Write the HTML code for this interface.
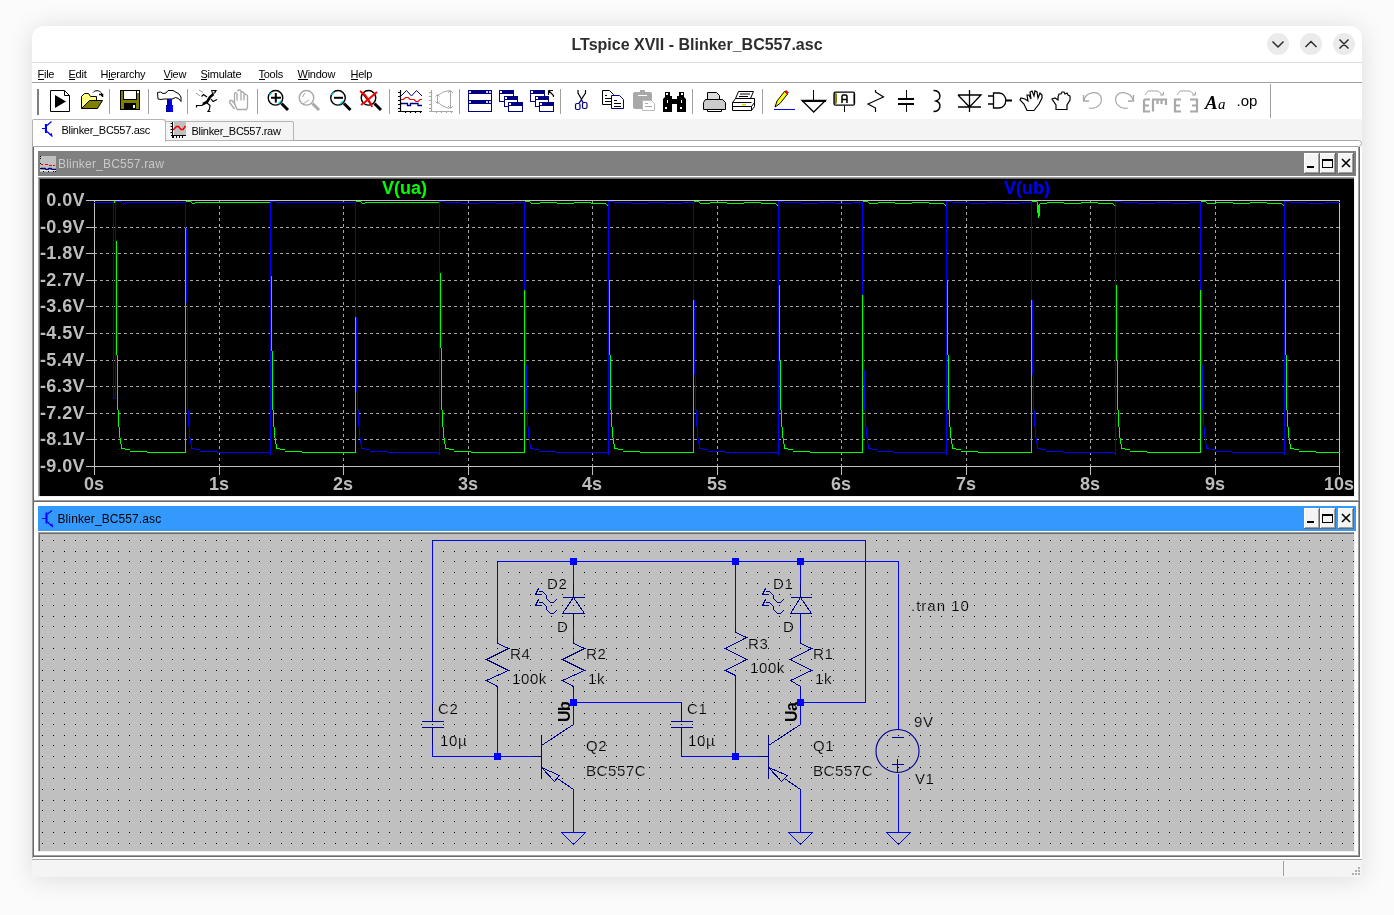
<!DOCTYPE html>
<html><head><meta charset="utf-8"><style>
*{margin:0;padding:0;box-sizing:border-box}
html,body{width:1394px;height:915px;overflow:hidden;background:#fbfbfb;font-family:"Liberation Sans", sans-serif}
.a{position:absolute}
svg{will-change:transform}
#win{left:32px;top:26px;width:1330px;height:851px;background:#fff;border-radius:12px 12px 0 0;box-shadow:0 2px 26px rgba(0,0,0,0.13)}
#title{left:0;top:33px;width:1394px;text-align:center;font-size:16px;font-weight:bold;color:#303030}
.cb{width:22px;height:22px;border-radius:50%;background:#ebebeb;top:33px}
.menu{top:67px;font-size:12px;color:#000}
.menu u{text-decoration:underline}
.tab{font-size:11.5px;color:#000}
</style></head><body>
<div id="win" class="a"></div>
<div class="a cb" style="left:1267px"></div>
<div class="a cb" style="left:1300px"></div>
<div class="a cb" style="left:1333px"></div>
<div class="a" style="left:32px;top:62px;width:1330px;height:1px;background:#dedede"></div>
<div class="a" style="left:32px;top:82px;width:1330px;height:1px;background:#a0a0a0"></div>
<!-- tab strip -->
<div class="a" style="left:32px;top:119px;width:1330px;height:22px;background:#f4f4f4"></div>
<div class="a" style="left:32px;top:140px;width:1330px;height:7px;background:#fff;border:1px solid #a8a8a8;border-radius:0 4px 4px 0"></div>
<div class="a" style="left:165px;top:121px;width:129px;height:20px;background:#f4f4f4;border:1px solid #b4b4b4;border-radius:2px 2px 0 0"></div>
<div class="a" style="left:32px;top:119px;width:134px;height:23px;background:#fff;border:1px solid #b4b4b4;border-bottom:none;border-radius:2px 3px 0 0"></div>
<!-- MDI -->
<div class="a" style="left:32px;top:147px;width:1330px;height:712px;background:#fff"></div>
<div class="a" style="left:32px;top:147px;width:1px;height:711px;background:#a0a0a0"></div>
<div class="a" style="left:33px;top:147px;width:1px;height:710px;background:#696969"></div>
<!-- raw child -->
<div class="a" style="left:1358px;top:147px;width:1px;height:354px;background:#a0a0a0"></div>
<div class="a" style="left:1359px;top:147px;width:1px;height:355px;background:#696969"></div>
<div class="a" style="left:34px;top:500px;width:1325px;height:1px;background:#a0a0a0"></div>
<div class="a" style="left:34px;top:501px;width:1326px;height:1px;background:#696969"></div>
<div class="a" style="left:38px;top:151px;width:1318px;height:25px;background:#808080"></div>
<div class="a" style="left:38px;top:177px;width:1316px;height:1px;background:#a0a0a0"></div>
<div class="a" style="left:39px;top:178px;width:1315px;height:1px;background:#696969"></div>
<div class="a" style="left:38px;top:177px;width:1px;height:320px;background:#a0a0a0"></div>
<div class="a" style="left:39px;top:178px;width:1px;height:318px;background:#696969"></div>
<div class="a" style="left:38px;top:496px;width:1318px;height:1px;background:#f0f0f0"></div>
<div class="a" style="left:1354px;top:177px;width:1px;height:320px;background:#f0f0f0"></div>
<!-- asc child -->
<div class="a" style="left:1358px;top:502px;width:1px;height:354px;background:#a0a0a0"></div>
<div class="a" style="left:1359px;top:502px;width:1px;height:355px;background:#696969"></div>
<div class="a" style="left:34px;top:855px;width:1325px;height:1px;background:#a0a0a0"></div>
<div class="a" style="left:34px;top:856px;width:1326px;height:1px;background:#696969"></div>
<div class="a" style="left:38px;top:506px;width:1318px;height:25px;background:#3399fd"></div>
<div class="a" style="left:38px;top:532px;width:1316px;height:1px;background:#a0a0a0"></div>
<div class="a" style="left:39px;top:533px;width:1315px;height:1px;background:#696969"></div>
<div class="a" style="left:38px;top:532px;width:1px;height:320px;background:#a0a0a0"></div>
<div class="a" style="left:39px;top:533px;width:1px;height:318px;background:#696969"></div>
<div class="a" style="left:38px;top:851px;width:1318px;height:1px;background:#f0f0f0"></div>
<div class="a" style="left:1354px;top:532px;width:1px;height:320px;background:#f0f0f0"></div>
<!-- status -->
<div class="a" style="left:32px;top:859px;width:1330px;height:1px;background:#a8a8a8"></div>
<div class="a" style="left:32px;top:860px;width:1330px;height:17px;background:#f4f4f4"></div>
<div class="a" style="left:1283px;top:861px;width:1px;height:15px;background:#a0a0a0"></div>
<svg class="a" style="left:0;top:0" width="1394" height="915">
<text x="697" y="49.5" text-anchor="middle" font-family='"Liberation Sans", sans-serif' font-size="16" font-weight="bold" fill="#2e2e2e">LTspice XVII - Blinker_BC557.asc</text><path d="M1272.5 41.5L1278 47L1283.5 41.5M1305.5 47L1311 41.5L1316.5 47M1339.5 39.5L1348.5 48.5M1348.5 39.5L1339.5 48.5" fill="none" stroke="#2e2e2e" stroke-width="1.5"/><text x="37.5" y="78" font-family='"Liberation Sans", sans-serif' font-size="11" letter-spacing="-0.25" fill="#000">File</text><text x="68.5" y="78" font-family='"Liberation Sans", sans-serif' font-size="11" letter-spacing="-0.25" fill="#000">Edit</text><text x="100.5" y="78" font-family='"Liberation Sans", sans-serif' font-size="11" letter-spacing="-0.25" fill="#000">Hierarchy</text><text x="163.5" y="78" font-family='"Liberation Sans", sans-serif' font-size="11" letter-spacing="-0.25" fill="#000">View</text><text x="200.5" y="78" font-family='"Liberation Sans", sans-serif' font-size="11" letter-spacing="-0.25" fill="#000">Simulate</text><text x="258.5" y="78" font-family='"Liberation Sans", sans-serif' font-size="11" letter-spacing="-0.25" fill="#000">Tools</text><text x="297.5" y="78" font-family='"Liberation Sans", sans-serif' font-size="11" letter-spacing="-0.25" fill="#000">Window</text><text x="350.5" y="78" font-family='"Liberation Sans", sans-serif' font-size="11" letter-spacing="-0.25" fill="#000">Help</text><rect x="38" y="79" width="6" height="1" fill="#000"/><rect x="69" y="79" width="6" height="1" fill="#000"/><rect x="108" y="79" width="6" height="1" fill="#000"/><rect x="164" y="79" width="7" height="1" fill="#000"/><rect x="201" y="79" width="6" height="1" fill="#000"/><rect x="259" y="79" width="6" height="1" fill="#000"/><rect x="298" y="79" width="10" height="1" fill="#000"/><rect x="351" y="79" width="7" height="1" fill="#000"/><text x="61.5" y="134" font-family='"Liberation Sans", sans-serif' font-size="11" letter-spacing="-0.3" fill="#000">Blinker_BC557.asc</text><text x="191.5" y="135" font-family='"Liberation Sans", sans-serif' font-size="11" letter-spacing="-0.3" fill="#000">Blinker_BC557.raw</text><path d="M42 128.5H45M45.5 124V133M47 125.5L51.5 121.5M47 131.5L52.5 136.5" stroke="#0000ff" stroke-width="1.2" fill="none"/><rect x="45" y="124" width="2" height="9" fill="#0000ff"/><path d="M49 134.5L52 133V136Z" fill="#0000ff"/><rect x="174" y="122" width="12" height="13" fill="#c0c0c0"/><path d="M172.5 122V138M170.5 123.5H172M170.5 126.5H172M170.5 129.5H172M170.5 132.5H172M171 135.5H186M173.5 136V138M176.5 136V138M179.5 136V138M182.5 136V138" stroke="#000" stroke-width="1" fill="none"/><path d="M173 130L176.5 126.5H178.5L181 129.5H183L185.5 126" stroke="#ff0000" stroke-width="1.5" fill="none"/><text x="58" y="168" font-family='"Liberation Sans", sans-serif' font-size="12" letter-spacing="0.2" fill="#c8c8c8">Blinker_BC557.raw</text><text x="57.5" y="523" font-family='"Liberation Sans", sans-serif' font-size="12" letter-spacing="0.1" fill="#000">Blinker_BC557.asc</text><rect x="40" y="156" width="16" height="16" fill="#c0c0c0"/><path d="M41 164.5H43M45 164.5H48M49 165.5H52M53 165.5H55" stroke="#ff0000" stroke-width="1.2"/><path d="M41 168.5H45L46 169.5H48L49 168.5H51L52 169.5H56" stroke="#000080" stroke-width="1.3" fill="none"/><path d="M40 156h1v1h-1zM40 158h1v1h-1zM40 163h1v1h-1zM40 168h1v1h-1zM43 171h1v1h-1zM48 171h1v1h-1zM53 171h1v1h-1zM55 171h1v1h-1z" fill="#000"/><path d="M40 170.5H56" stroke="#f0f0f0" stroke-width="1"/><path d="M42 518.5H46M47.5 514L52 510.5M47.5 522L53 527" stroke="#0000ff" stroke-width="1.2" fill="none"/><rect x="45.5" y="512.5" width="2" height="11" fill="#0000ff"/><path d="M49.5 525L52.5 523.5V526.5Z" fill="#0000ff"/><rect x="1304" y="153" width="16" height="21" fill="#f4f4f4"/><rect x="1304" y="153" width="15" height="1" fill="#fff"/><rect x="1304" y="153" width="1" height="20" fill="#fff"/><rect x="1318" y="154" width="1" height="19" fill="#a0a0a0"/><rect x="1305" y="172" width="14" height="1" fill="#a0a0a0"/><rect x="1319" y="153" width="1" height="21" fill="#696969"/><rect x="1304" y="173" width="16" height="1" fill="#696969"/><rect x="1320" y="153" width="16" height="21" fill="#f4f4f4"/><rect x="1320" y="153" width="15" height="1" fill="#fff"/><rect x="1320" y="153" width="1" height="20" fill="#fff"/><rect x="1334" y="154" width="1" height="19" fill="#a0a0a0"/><rect x="1321" y="172" width="14" height="1" fill="#a0a0a0"/><rect x="1335" y="153" width="1" height="21" fill="#696969"/><rect x="1320" y="173" width="16" height="1" fill="#696969"/><rect x="1338" y="153" width="16" height="21" fill="#f4f4f4"/><rect x="1338" y="153" width="15" height="1" fill="#fff"/><rect x="1338" y="153" width="1" height="20" fill="#fff"/><rect x="1352" y="154" width="1" height="19" fill="#a0a0a0"/><rect x="1339" y="172" width="14" height="1" fill="#a0a0a0"/><rect x="1353" y="153" width="1" height="21" fill="#696969"/><rect x="1338" y="173" width="16" height="1" fill="#696969"/><rect x="1307" y="166" width="7" height="2" fill="#000"/><path d="M1322 159h11v9h-11zM1323 161v6h9v-6z" fill="#000" fill-rule="evenodd"/><path d="M1342 159L1350 167M1350 159L1342 167" stroke="#000" stroke-width="1.6"/><rect x="1304" y="508" width="16" height="21" fill="#f4f4f4"/><rect x="1304" y="508" width="15" height="1" fill="#fff"/><rect x="1304" y="508" width="1" height="20" fill="#fff"/><rect x="1318" y="509" width="1" height="19" fill="#a0a0a0"/><rect x="1305" y="527" width="14" height="1" fill="#a0a0a0"/><rect x="1319" y="508" width="1" height="21" fill="#696969"/><rect x="1304" y="528" width="16" height="1" fill="#696969"/><rect x="1320" y="508" width="16" height="21" fill="#f4f4f4"/><rect x="1320" y="508" width="15" height="1" fill="#fff"/><rect x="1320" y="508" width="1" height="20" fill="#fff"/><rect x="1334" y="509" width="1" height="19" fill="#a0a0a0"/><rect x="1321" y="527" width="14" height="1" fill="#a0a0a0"/><rect x="1335" y="508" width="1" height="21" fill="#696969"/><rect x="1320" y="528" width="16" height="1" fill="#696969"/><rect x="1338" y="508" width="16" height="21" fill="#f4f4f4"/><rect x="1338" y="508" width="15" height="1" fill="#fff"/><rect x="1338" y="508" width="1" height="20" fill="#fff"/><rect x="1352" y="509" width="1" height="19" fill="#a0a0a0"/><rect x="1339" y="527" width="14" height="1" fill="#a0a0a0"/><rect x="1353" y="508" width="1" height="21" fill="#696969"/><rect x="1338" y="528" width="16" height="1" fill="#696969"/><rect x="1307" y="521" width="7" height="2" fill="#000"/><path d="M1322 514h11v9h-11zM1323 516v6h9v-6z" fill="#000" fill-rule="evenodd"/><path d="M1342 514L1350 522M1350 514L1342 522" stroke="#000" stroke-width="1.6"/><rect x="1358" y="867" width="2" height="2" fill="#b0b0b0"/><rect x="1355" y="870" width="2" height="2" fill="#b0b0b0"/><rect x="1358" y="870" width="2" height="2" fill="#b0b0b0"/><rect x="1352" y="873" width="2" height="2" fill="#b0b0b0"/><rect x="1355" y="873" width="2" height="2" fill="#b0b0b0"/><rect x="1358" y="873" width="2" height="2" fill="#b0b0b0"/>
</svg>
<svg class="a" style="left:0;top:0" width="1394" height="915">
<path d="M38 89.5V114.5" stroke="#000" stroke-width="2" stroke-dasharray="1 1"/><rect x="109" y="89" width="1" height="25" fill="#a0a0a0"/><rect x="148" y="89" width="1" height="25" fill="#a0a0a0"/><rect x="187" y="89" width="1" height="25" fill="#a0a0a0"/><rect x="257" y="89" width="1" height="25" fill="#a0a0a0"/><rect x="389" y="89" width="1" height="25" fill="#a0a0a0"/><rect x="459" y="89" width="1" height="25" fill="#a0a0a0"/><rect x="560" y="89" width="1" height="25" fill="#a0a0a0"/><rect x="692" y="89" width="1" height="25" fill="#a0a0a0"/><rect x="762" y="89" width="1" height="25" fill="#a0a0a0"/><rect x="1270" y="84" width="1" height="34" fill="#a0a0a0"/><path d="M50.5 90.5H64.5L69.5 95.5V111.5H50.5Z" fill="#fff" stroke="#000"/><path d="M64.5 90.5V95.5H69.5" fill="none" stroke="#000"/><path d="M55 95V108L66 101.5Z" fill="#000"/><path d="M81.5 108.5V96.5L84.5 93.5H88.5L90.5 96.5H96.5V100.5" fill="#ffff80" stroke="#000"/><path d="M81.5 108.5L89.5 100.5H102.5L97.5 108.5Z" fill="#808000" stroke="#000"/><path d="M93 92.5C95 90 99 90 101.5 93V96" fill="none" stroke="#000" stroke-width="1"/><path d="M99 94.5H102.5V97" fill="none" stroke="#000" stroke-width="1.5"/><rect x="120.5" y="90.5" width="19" height="19" fill="#808000" stroke="#000"/><rect x="123.5" y="90.5" width="13" height="9" fill="#fff" stroke="#000"/><rect x="137" y="91" width="2" height="2" fill="#fff"/><rect x="124" y="103" width="12" height="6" fill="#000"/><rect x="133" y="105" width="2" height="3" fill="#fff"/><path d="M157.5 92.5L160.5 92L163 93.5L166 93L168 90.5H173L179 94L181 97V101.5L178.5 98.5L175.5 97.5L172 99H164L161 99.5L158 99Z" fill="#fff" stroke="#000"/><rect x="167" y="99" width="3" height="13" fill="#0000a0"/><rect x="170" y="99" width="2" height="13" fill="#0000ff"/><rect x="166" y="105" width="1" height="7" fill="#0000a0"/><rect x="172" y="105" width="1" height="7" fill="#0000ff"/><path d="M211 90H217L215 93.5H212Z" fill="#000"/><rect x="212.5" y="91" width="2" height="1.5" fill="#fff"/><path d="M213.5 94L210 97L207 102L203 104" stroke="#000" stroke-width="2.6" fill="none"/><path d="M207 97L203.5 94.5L201.5 96.5M211 99L213 101.5L217 99.5M204 103.5L202 105.5H196.5V107.5M207 103L210 105.5L209.5 109L208 111.5H210.5" stroke="#000" stroke-width="1.2" fill="none"/><path d="M199 90L203 92.5M196 93L200 96" stroke="#999" stroke-width="1"/><path d="M234.5 109L229.5 102.5L230 100.5L232 100.5L234.5 103.5V93.5M237 109.5H246.5L247.5 107V95.5L246 94.5M234.5 93.5L235.5 92.5L237 93.5V100.5M237 91L238.5 90H240L241 91V100.5M241 92L243 92L244 93V100.5M244 94L246 94.5" fill="none" stroke="#a8a8a8" stroke-width="1.3"/><path d="M234.5 103.5L237 109.5" stroke="#a8a8a8" stroke-width="1.3"/><circle cx="275.5" cy="97.8" r="7.3" fill="#fff" stroke="#000" stroke-width="1.4"/><path d="M281.5 103.5L288.0 110" stroke="#000" stroke-width="3"/><path d="M271 97.8H281M275.8 93V102.6" stroke="#000" stroke-width="2"/><path d="M269.5 95L272 92.5M278 104L281 101" stroke="#00e0e0" stroke-width="1.2"/><circle cx="306.5" cy="97.8" r="7.3" fill="#fff" stroke="#a8a8a8" stroke-width="1.4"/><path d="M312.5 103.5L319.0 110" stroke="#a8a8a8" stroke-width="3"/><path d="M302.5 97L305 93M303 104L309 100" stroke="#a8a8a8" stroke-width="1"/><circle cx="338" cy="97.8" r="7.3" fill="#fff" stroke="#000" stroke-width="1.4"/><path d="M344 103.5L350.5 110" stroke="#000" stroke-width="3"/><path d="M334 97.8H343" stroke="#000" stroke-width="2"/><path d="M331.5 95L334 92.5M340 104L343 101" stroke="#00e0e0" stroke-width="1.2"/><circle cx="368.5" cy="97.8" r="7.3" fill="#fff" stroke="#000" stroke-width="1.4"/><path d="M374.5 103.5L381.0 110" stroke="#000" stroke-width="3"/><path d="M360 91L365 95L371 104L372 107M361 105L365 102L370 98L377 92" stroke="#ff0000" stroke-width="2"/><path d="M400.5 90V112M398 111.5H422M398 92.5H400M398 96.5H400M398 100.5H400M398 104.5H400M398 108.5H400M405.5 111V113M410.5 111V113M415.5 111V113M420.5 111V113" stroke="#000" stroke-width="1.2"/><path d="M401 96L406.5 90.5L411.5 96L416.5 90.5L422 96" stroke="#000080" fill="none" stroke-width="1"/><path d="M401 99.5L403.5 99.5L405.5 97.5H408L410 99.5H414L416 101.5H418L420 99.5H422" stroke="#f00" fill="none" stroke-width="1.2"/><path d="M401 103.5H407.5V105.5H410.5V103.5H418V105.5H422" stroke="#000080" fill="none" stroke-width="1.3"/><path d="M431.5 90V112M429 111.5H453M429 92.5H431M429 96.5H431M429 100.5H431M429 104.5H431M429 108.5H431M436.5 111V113M441.5 111V113M446.5 111V113M451.5 111V113" stroke="#a8a8a8" stroke-width="1.2"/><path d="M437 96L443 92L450 90.5M437 102L443 106L449 108.5M437.5 95V103M450.5 91V108M435.5 96.5L437.5 94.5L439.5 96.5M435.5 101.5L437.5 103.5L439.5 101.5M448 93L450.5 90.5L453 93M448 106L450.5 108.5L453 106" stroke="#a8a8a8" fill="none" stroke-width="1"/><rect x="468.5" y="90.5" width="23" height="21" fill="#fff" stroke="#000080"/><rect x="468" y="90" width="24" height="4" fill="#000080"/><rect x="468" y="100" width="24" height="4" fill="#000080"/><path d="M469.5 91.5h1v1h-1zM486.5 91.5h1v1h-1zM489.5 91.5h1v1h-1zM469.5 101.5h1v1h-1zM486.5 101.5h1v1h-1zM489.5 101.5h1v1h-1z" fill="#fff" stroke="#fff"/><rect x="499.5" y="90.5" width="14" height="11" fill="#fff" stroke="#000080"/><rect x="499" y="90" width="15" height="4" fill="#000080"/><rect x="500" y="91" width="2" height="2" fill="#fff"/><rect x="504.5" y="96.5" width="13" height="10" fill="#fff" stroke="#000080"/><rect x="504" y="96" width="14" height="4" fill="#000080"/><rect x="505" y="97" width="2" height="2" fill="#fff"/><rect x="508.5" y="102.5" width="14" height="9" fill="#fff" stroke="#000080"/><rect x="508" y="102" width="15" height="4" fill="#000080"/><rect x="509" y="103" width="2" height="2" fill="#fff"/><rect x="530.5" y="90.5" width="14" height="11" fill="#fff" stroke="#000080"/><rect x="530" y="90" width="15" height="4" fill="#000080"/><rect x="531" y="91" width="2" height="2" fill="#fff"/><rect x="535.5" y="96.5" width="13" height="10" fill="#fff" stroke="#000080"/><rect x="535" y="96" width="14" height="4" fill="#000080"/><rect x="536" y="97" width="2" height="2" fill="#fff"/><rect x="539.5" y="102.5" width="14" height="9" fill="#fff" stroke="#000080"/><rect x="539" y="102" width="15" height="4" fill="#000080"/><rect x="540" y="103" width="2" height="2" fill="#fff"/><path d="M548.5 90.5V95M548.5 90.5H553M549 91L553.5 95.5V97" stroke="#000" stroke-width="1.2" fill="none"/><path d="M578 90V93L582 100M585.5 90V93L581 100" stroke="#000" stroke-width="1.2" fill="none"/><path d="M581.5 100L579 103M581.5 100L583.5 103" stroke="#000080" stroke-width="1.2"/><rect x="575.5" y="103.5" width="4.5" height="6" rx="1.5" fill="none" stroke="#000080" stroke-width="1.2"/><rect x="582.5" y="102.5" width="4.5" height="6" rx="1.5" fill="none" stroke="#000080" stroke-width="1.2"/><path d="M602.5 90.5H609.5L613.5 94.5V104.5H602.5Z" fill="#fff" stroke="#000"/><path d="M605 95.5H607M605 98.5H611M605 101.5H611" stroke="#000"/><path d="M611.5 95.5H619.5L623.5 99.5V108.5H611.5Z" fill="#fff" stroke="#000080"/><path d="M614 100.5H617M614 103.5H621M614 106.5H621" stroke="#000"/><rect x="633" y="92" width="19" height="17" rx="2" fill="#a8a8a8"/><rect x="640" y="90" width="5" height="3" fill="#a8a8a8"/><path d="M638 95.5H647" stroke="#fff"/><path d="M642.5 100.5H651.5L654.5 103.5V110.5H642.5Z" fill="#fff" stroke="#bbb"/><path d="M645 103.5H648M645 106.5H652" stroke="#a8a8a8"/><path d="M665 92H670V96H672V99H677V96H679V92H684V97L686 99V112H677V104H672V112H663V99L665 97Z" fill="#000"/><rect x="666" y="93" width="2" height="2" fill="#fff"/><rect x="681" y="93" width="2" height="2" fill="#fff"/><rect x="665" y="107" width="2" height="2" fill="#fff"/><rect x="680" y="107" width="2" height="2" fill="#fff"/><rect x="667" y="100" width="1" height="3" fill="#fff"/><rect x="681" y="100" width="1" height="3" fill="#fff"/><path d="M707.5 92.5H716.5L719.5 95.5V99.5H707.5Z" fill="#ddd" stroke="#000"/><path d="M703.5 102.5L705.5 99.5H722.5L725.5 102.5V109.5H703.5Z" fill="#ccc" stroke="#000"/><path d="M707.5 109.5V111.5H721.5V109.5" fill="none" stroke="#000"/><path d="M738.5 91.5H753.5L750.5 98.5H735.5Z" fill="#fff" stroke="#000"/><path d="M740 94H750M739 96.5H748" stroke="#000"/><path d="M732.5 102.5L735.5 98.5H754.5V106.5L751.5 110.5H732.5Z" fill="#fff" stroke="#000"/><path d="M732.5 106.5H751.5L754.5 102.5M751.5 106.5V110.5M732.5 102.5H751.5" fill="none" stroke="#000"/><rect x="742" y="104" width="4" height="1.5" fill="#e0d000"/><path d="M775 107L777 101L784.5 91.5L787.5 94L780 103.5Z" fill="#ffff00" stroke="#000"/><path d="M784.5 91.5L786 90L789 92.5L787.5 94Z" fill="#ff0000"/><path d="M774 109.5H795" stroke="#0000ff"/><rect x="813" y="90" width="1" height="10" fill="#000"/><path d="M802 100.5H825.5L813.7 112Z" fill="none" stroke="#000" stroke-width="1.3"/><rect x="802" y="100" width="24" height="2" fill="#000"/><rect x="834" y="92.2" width="20.5" height="13" rx="1.5" fill="#fff" stroke="#000" stroke-width="1.3"/><rect x="834.5" y="93" width="1" height="11" fill="#000"/><rect x="836" y="93.5" width="1" height="10" fill="#808000"/><rect x="853" y="93.5" width="1" height="10" fill="#808000"/><rect x="844" y="106" width="1" height="6" fill="#000"/><path d="M842 103V96L843 95H846L847 96V103M842 99.5H847" fill="none" stroke="#000" stroke-width="1.5"/><path d="M875.5 90V92L883.5 97L868 104L875.5 108V112" fill="none" stroke="#000" stroke-width="1.2"/><rect x="906" y="90" width="1" height="9" fill="#000"/><rect x="898" y="98" width="16" height="2" fill="#000"/><rect x="898" y="103" width="16" height="2" fill="#000"/><rect x="906" y="105" width="1" height="7" fill="#000"/><path d="M933.5 90.5C941 90.5 942 99 936 101C942 103 941 111.5 933.5 111.5" fill="none" stroke="#000" stroke-width="1.4"/><path d="M969.5 90V112M958 95H981L969.5 107L958 95M958 107H981" fill="none" stroke="#000" stroke-width="1.3"/><path d="M988 96H993M988 104H993M993.5 93V108H999C1008 108 1008 93 999 93Z" fill="#fff" stroke="#000" stroke-width="1.3"/><path d="M1006 100.5H1012" stroke="#000" stroke-width="2"/><path d="M1027 110.5H1034L1039 104L1042 98V95L1040 93L1038 98L1037 92L1035 91L1034 96L1032 91L1030 92L1031 99L1029 95H1027L1028 101L1025 99L1021 98L1020 100L1024 104Z" fill="#fff" stroke="#000" stroke-width="1.2"/><path d="M1056 109.5H1067V105L1070 100V96L1068 95L1067 93L1065 94L1064 92L1062 92L1061 94L1059 94L1058 97V100L1055 98L1052 99L1056 105Z" fill="#fff" stroke="#000" stroke-width="1.2"/><path d="M1084 100C1086 92 1098 90 1101 97C1103 104 1096 110 1089 108" fill="none" stroke="#a8a8a8" stroke-width="1.3"/><path d="M1083.5 95V101H1089" fill="none" stroke="#a8a8a8" stroke-width="1.3"/><path d="M1133 100C1131 92 1119 90 1116 97C1114 104 1121 110 1128 108" fill="none" stroke="#a8a8a8" stroke-width="1.3"/><path d="M1133.5 95V101H1128" fill="none" stroke="#a8a8a8" stroke-width="1.3"/><path d="M1145 95L1148 91H1158L1163 95M1160 95H1163.5V92" fill="none" stroke="#a8a8a8" stroke-width="1"/><path d="M1144 99.5H1150M1144 99.5V111.5H1150M1144 105.5H1149M1153 111.5V99.5H1166V105M1157.5 99.5V104M1161.5 99.5V104" fill="none" stroke="#a8a8a8" stroke-width="2.2"/><path d="M1177 95L1180 91H1190L1195 95M1192 95H1195.5V92" fill="none" stroke="#a8a8a8" stroke-width="1"/><path d="M1181 99.5H1175V111.5H1181M1175 105.5H1180M1190 99.5H1197V111.5H1190M1197 105.5H1192" fill="none" stroke="#a8a8a8" stroke-width="2.2"/><text x="1205" y="109" font-family="Liberation Serif" font-size="19" font-weight="bold" font-style="italic" fill="#000">A</text><text x="1218" y="109" font-family="Liberation Serif" font-size="15" font-style="italic" fill="#000">a</text><text x="1236.5" y="105.5" font-family="Liberation Sans" font-size="15" fill="#000">.op</text>
<rect x="40" y="179" width="1314" height="317" fill="#000"/><g shape-rendering="crispEdges"><line x1="94" y1="227.5" x2="1339" y2="227.5" stroke="#a8a8a8" stroke-dasharray="3 3"/><line x1="94" y1="253.5" x2="1339" y2="253.5" stroke="#a8a8a8" stroke-dasharray="3 3"/><line x1="94" y1="280.5" x2="1339" y2="280.5" stroke="#a8a8a8" stroke-dasharray="3 3"/><line x1="94" y1="306.5" x2="1339" y2="306.5" stroke="#a8a8a8" stroke-dasharray="3 3"/><line x1="94" y1="333.5" x2="1339" y2="333.5" stroke="#a8a8a8" stroke-dasharray="3 3"/><line x1="94" y1="360.5" x2="1339" y2="360.5" stroke="#a8a8a8" stroke-dasharray="3 3"/><line x1="94" y1="386.5" x2="1339" y2="386.5" stroke="#a8a8a8" stroke-dasharray="3 3"/><line x1="94" y1="413.5" x2="1339" y2="413.5" stroke="#a8a8a8" stroke-dasharray="3 3"/><line x1="94" y1="439.5" x2="1339" y2="439.5" stroke="#a8a8a8" stroke-dasharray="3 3"/><line x1="219.5" y1="200" x2="219.5" y2="466" stroke="#a8a8a8" stroke-dasharray="3 3"/><line x1="343.5" y1="200" x2="343.5" y2="466" stroke="#a8a8a8" stroke-dasharray="3 3"/><line x1="468.5" y1="200" x2="468.5" y2="466" stroke="#a8a8a8" stroke-dasharray="3 3"/><line x1="592.5" y1="200" x2="592.5" y2="466" stroke="#a8a8a8" stroke-dasharray="3 3"/><line x1="717.5" y1="200" x2="717.5" y2="466" stroke="#a8a8a8" stroke-dasharray="3 3"/><line x1="841.5" y1="200" x2="841.5" y2="466" stroke="#a8a8a8" stroke-dasharray="3 3"/><line x1="966.5" y1="200" x2="966.5" y2="466" stroke="#a8a8a8" stroke-dasharray="3 3"/><line x1="1090.5" y1="200" x2="1090.5" y2="466" stroke="#a8a8a8" stroke-dasharray="3 3"/><line x1="1215.5" y1="200" x2="1215.5" y2="466" stroke="#a8a8a8" stroke-dasharray="3 3"/><rect x="94.5" y="200.5" width="1245" height="266" fill="none" stroke="#c0c0c0"/><line x1="86" y1="200.5" x2="94" y2="200.5" stroke="#c0c0c0"/><line x1="86" y1="227.5" x2="94" y2="227.5" stroke="#c0c0c0"/><line x1="86" y1="253.5" x2="94" y2="253.5" stroke="#c0c0c0"/><line x1="86" y1="280.5" x2="94" y2="280.5" stroke="#c0c0c0"/><line x1="86" y1="306.5" x2="94" y2="306.5" stroke="#c0c0c0"/><line x1="86" y1="333.5" x2="94" y2="333.5" stroke="#c0c0c0"/><line x1="86" y1="360.5" x2="94" y2="360.5" stroke="#c0c0c0"/><line x1="86" y1="386.5" x2="94" y2="386.5" stroke="#c0c0c0"/><line x1="86" y1="413.5" x2="94" y2="413.5" stroke="#c0c0c0"/><line x1="86" y1="439.5" x2="94" y2="439.5" stroke="#c0c0c0"/><line x1="86" y1="466.5" x2="94" y2="466.5" stroke="#c0c0c0"/><line x1="94.5" y1="466" x2="94.5" y2="475" stroke="#c0c0c0"/><line x1="219.5" y1="466" x2="219.5" y2="475" stroke="#c0c0c0"/><line x1="343.5" y1="466" x2="343.5" y2="475" stroke="#c0c0c0"/><line x1="468.5" y1="466" x2="468.5" y2="475" stroke="#c0c0c0"/><line x1="592.5" y1="466" x2="592.5" y2="475" stroke="#c0c0c0"/><line x1="717.5" y1="466" x2="717.5" y2="475" stroke="#c0c0c0"/><line x1="841.5" y1="466" x2="841.5" y2="475" stroke="#c0c0c0"/><line x1="966.5" y1="466" x2="966.5" y2="475" stroke="#c0c0c0"/><line x1="1090.5" y1="466" x2="1090.5" y2="475" stroke="#c0c0c0"/><line x1="1215.5" y1="466" x2="1215.5" y2="475" stroke="#c0c0c0"/><line x1="1339.5" y1="466" x2="1339.5" y2="475" stroke="#c0c0c0"/></g><g fill="#bdbdbd" font-family='"Liberation Sans", sans-serif' font-size="18" font-weight="bold"><text x="85" y="206" text-anchor="end" letter-spacing="0.4">0.0V</text><text x="85" y="233" text-anchor="end" letter-spacing="0.4">-0.9V</text><text x="85" y="259" text-anchor="end" letter-spacing="0.4">-1.8V</text><text x="85" y="286" text-anchor="end" letter-spacing="0.4">-2.7V</text><text x="85" y="312" text-anchor="end" letter-spacing="0.4">-3.6V</text><text x="85" y="339" text-anchor="end" letter-spacing="0.4">-4.5V</text><text x="85" y="366" text-anchor="end" letter-spacing="0.4">-5.4V</text><text x="85" y="392" text-anchor="end" letter-spacing="0.4">-6.3V</text><text x="85" y="419" text-anchor="end" letter-spacing="0.4">-7.2V</text><text x="85" y="445" text-anchor="end" letter-spacing="0.4">-8.1V</text><text x="85" y="472" text-anchor="end" letter-spacing="0.4">-9.0V</text><text x="94" y="490" text-anchor="middle">0s</text><text x="219" y="490" text-anchor="middle">1s</text><text x="343" y="490" text-anchor="middle">2s</text><text x="468" y="490" text-anchor="middle">3s</text><text x="592" y="490" text-anchor="middle">4s</text><text x="717" y="490" text-anchor="middle">5s</text><text x="841" y="490" text-anchor="middle">6s</text><text x="966" y="490" text-anchor="middle">7s</text><text x="1090" y="490" text-anchor="middle">8s</text><text x="1215" y="490" text-anchor="middle">9s</text><text x="1339" y="490" text-anchor="middle">10s</text></g><text x="382" y="194" fill="#00ff00" font-family='"Liberation Sans", sans-serif' font-size="18" font-weight="bold">V(ua)</text><text x="1004" y="194" fill="#0000ff" font-family='"Liberation Sans", sans-serif' font-size="18" font-weight="bold">V(ub)</text><path d="M114 201h1v2h-1zM115 202h1v39h-1zM116 241h1v114h-1zM117 355h1v55h-1zM118 410h1v17h-1zM119 427h1v11h-1zM120 438h1v6h-1zM121 444h1v5h-1zM185 202h1v251h-1zM270 202h1v74h-1zM271 276h1v75h-1zM272 351h1v59h-1zM273 410h1v17h-1zM274 427h1v11h-1zM275 438h1v6h-1zM276 444h1v5h-1zM355 202h1v251h-1zM439 202h1v71h-1zM440 273h1v75h-1zM441 348h1v62h-1zM442 410h1v17h-1zM443 427h1v11h-1zM444 438h1v6h-1zM445 444h1v5h-1zM524 202h1v251h-1zM608 202h1v78h-1zM609 280h1v75h-1zM610 355h1v55h-1zM611 410h1v17h-1zM612 427h1v11h-1zM613 438h1v6h-1zM614 444h1v5h-1zM693 202h1v251h-1zM778 202h1v83h-1zM779 285h1v75h-1zM780 360h1v50h-1zM781 410h1v17h-1zM782 427h1v11h-1zM783 438h1v6h-1zM784 444h1v5h-1zM862 202h1v251h-1zM946 202h1v78h-1zM947 280h1v75h-1zM948 355h1v55h-1zM949 410h1v17h-1zM950 427h1v11h-1zM951 438h1v6h-1zM952 444h1v5h-1zM1031 202h1v251h-1zM1037 202h1v11h-1zM1038 205h1v13h-1zM1039 204h1v12h-1zM1115 202h1v83h-1zM1116 285h1v75h-1zM1117 360h1v50h-1zM1118 410h1v17h-1zM1119 427h1v11h-1zM1120 438h1v6h-1zM1121 444h1v5h-1zM1200 202h1v251h-1zM1284 202h1v78h-1zM1285 280h1v75h-1zM1286 355h1v55h-1zM1287 410h1v17h-1zM1288 427h1v11h-1zM1289 438h1v6h-1zM1290 444h1v5h-1zM94 202h20v1h-20zM191 202h1v1h-1zM195 202h75v1h-75zM361 202h1v1h-1zM365 202h74v1h-74zM530 202h1v1h-1zM540 202h17v1h-17zM574 202h17v1h-17zM699 202h1v1h-1zM710 202h17v1h-17zM744 202h17v1h-17zM868 202h1v1h-1zM878 202h17v1h-17zM912 202h17v1h-17zM1047 202h17v1h-17zM1081 202h17v1h-17zM1206 202h1v1h-1zM1216 202h17v1h-17zM1250 202h17v1h-17zM122 448h3v1h-3zM277 448h3v1h-3zM446 448h3v1h-3zM615 448h3v1h-3zM785 448h3v1h-3zM953 448h3v1h-3zM1122 448h3v1h-3zM1291 448h3v1h-3zM125 449h5v1h-5zM280 449h5v1h-5zM449 449h5v1h-5zM618 449h5v1h-5zM788 449h5v1h-5zM956 449h5v1h-5zM1125 449h5v1h-5zM1294 449h5v1h-5zM130 451h17v1h-17zM285 451h17v1h-17zM454 451h17v1h-17zM623 451h17v1h-17zM793 451h17v1h-17zM961 451h17v1h-17zM1130 451h17v1h-17zM1299 451h17v1h-17zM147 452h38v1h-38zM302 452h53v1h-53zM471 452h53v1h-53zM640 452h53v1h-53zM810 452h52v1h-52zM978 452h53v1h-53zM1147 452h53v1h-53zM1316 452h24v1h-24zM186 201h5v1h-5zM356 201h5v1h-5zM525 201h5v1h-5zM694 201h5v1h-5zM863 201h5v1h-5zM1032 201h5v1h-5zM1201 201h5v1h-5zM192 203h3v1h-3zM362 203h3v1h-3zM531 203h9v1h-9zM557 203h17v1h-17zM591 203h15v1h-15zM700 203h10v1h-10zM727 203h17v1h-17zM761 203h15v1h-15zM869 203h9v1h-9zM895 203h17v1h-17zM929 203h15v1h-15zM1040 203h7v1h-7zM1064 203h17v1h-17zM1098 203h15v1h-15zM1207 203h9v1h-9zM1233 203h17v1h-17zM1267 203h15v1h-15zM606 204h1v1h-1zM776 204h1v1h-1zM944 204h1v1h-1zM1113 204h1v1h-1zM1282 204h1v1h-1zM607 205h1v1h-1zM777 205h1v1h-1zM945 205h1v1h-1zM1114 205h1v1h-1zM1283 205h1v1h-1z" fill="#00ff00"/><path d="M113 202h1v197h-1zM115 201h1v198h-1zM185 202h1v26h-1zM186 228h1v75h-1zM187 303h1v107h-1zM188 410h1v17h-1zM189 427h1v11h-1zM190 438h1v6h-1zM191 444h1v5h-1zM270 201h1v254h-1zM355 202h1v115h-1zM356 317h1v75h-1zM357 392h1v18h-1zM358 410h1v17h-1zM359 427h1v11h-1zM360 438h1v6h-1zM361 444h1v5h-1zM439 201h1v254h-1zM524 202h1v88h-1zM525 290h1v75h-1zM526 365h1v45h-1zM527 410h1v17h-1zM528 427h1v11h-1zM529 438h1v6h-1zM530 444h1v5h-1zM608 201h1v254h-1zM693 202h1v98h-1zM694 300h1v75h-1zM695 375h1v35h-1zM696 410h1v17h-1zM697 427h1v11h-1zM698 438h1v6h-1zM699 444h1v5h-1zM778 201h1v254h-1zM862 202h1v93h-1zM863 295h1v75h-1zM864 370h1v40h-1zM865 410h1v17h-1zM866 427h1v11h-1zM867 438h1v6h-1zM868 444h1v5h-1zM946 201h1v254h-1zM1031 202h1v98h-1zM1032 300h1v75h-1zM1033 375h1v35h-1zM1034 410h1v17h-1zM1035 427h1v11h-1zM1036 438h1v6h-1zM1037 444h1v5h-1zM1115 201h1v254h-1zM1200 202h1v88h-1zM1201 290h1v75h-1zM1202 365h1v45h-1zM1203 410h1v17h-1zM1204 427h1v11h-1zM1205 438h1v6h-1zM1206 444h1v5h-1zM1284 201h1v254h-1zM94 202h19v1h-19zM121 202h1v1h-1zM125 202h60v1h-60zM276 202h79v1h-79zM445 202h17v1h-17zM479 202h17v1h-17zM513 202h11v1h-11zM614 202h17v1h-17zM648 202h17v1h-17zM682 202h11v1h-11zM784 202h17v1h-17zM818 202h17v1h-17zM852 202h10v1h-10zM952 202h17v1h-17zM986 202h17v1h-17zM1020 202h11v1h-11zM1121 202h17v1h-17zM1155 202h17v1h-17zM1189 202h11v1h-11zM1290 202h17v1h-17zM1324 202h16v1h-16zM114 398h1v1h-1zM116 201h5v1h-5zM271 201h5v1h-5zM440 201h5v1h-5zM609 201h5v1h-5zM779 201h5v1h-5zM947 201h5v1h-5zM1116 201h5v1h-5zM1285 201h5v1h-5zM122 203h1v1h-1zM124 203h1v1h-1zM462 203h17v1h-17zM496 203h17v1h-17zM631 203h17v1h-17zM665 203h17v1h-17zM801 203h17v1h-17zM835 203h17v1h-17zM969 203h17v1h-17zM1003 203h17v1h-17zM1138 203h17v1h-17zM1172 203h17v1h-17zM1307 203h17v1h-17zM123 204h1v1h-1zM192 448h3v1h-3zM362 448h3v1h-3zM531 448h3v1h-3zM700 448h3v1h-3zM869 448h3v1h-3zM1038 448h3v1h-3zM1207 448h3v1h-3zM195 449h5v1h-5zM365 449h5v1h-5zM534 449h5v1h-5zM703 449h5v1h-5zM872 449h5v1h-5zM1041 449h5v1h-5zM1210 449h5v1h-5zM200 451h17v1h-17zM370 451h17v1h-17zM539 451h17v1h-17zM708 451h17v1h-17zM877 451h17v1h-17zM1046 451h17v1h-17zM1215 451h17v1h-17zM217 452h52v1h-52zM387 452h51v1h-51zM556 452h51v1h-51zM725 452h52v1h-52zM894 452h51v1h-51zM1063 452h51v1h-51zM1232 452h51v1h-51zM269 453h1v1h-1zM438 453h1v1h-1zM607 453h1v1h-1zM777 453h1v1h-1zM945 453h1v1h-1zM1114 453h1v1h-1zM1283 453h1v1h-1z" fill="#0000ff"/>
<rect x="40" y="534" width="1314" height="317" fill="#c0c0c0"/><path d="M42 540h1v1h-1zM42 551h1v1h-1zM42 561h1v1h-1zM42 572h1v1h-1zM42 583h1v1h-1zM42 594h1v1h-1zM42 605h1v1h-1zM42 616h1v1h-1zM42 626h1v1h-1zM42 637h1v1h-1zM42 648h1v1h-1zM42 659h1v1h-1zM42 670h1v1h-1zM42 680h1v1h-1zM42 691h1v1h-1zM42 702h1v1h-1zM42 713h1v1h-1zM42 724h1v1h-1zM42 735h1v1h-1zM42 745h1v1h-1zM42 756h1v1h-1zM42 767h1v1h-1zM42 778h1v1h-1zM42 789h1v1h-1zM42 800h1v1h-1zM42 810h1v1h-1zM42 821h1v1h-1zM42 832h1v1h-1zM42 843h1v1h-1zM53 540h1v1h-1zM53 551h1v1h-1zM53 561h1v1h-1zM53 572h1v1h-1zM53 583h1v1h-1zM53 594h1v1h-1zM53 605h1v1h-1zM53 616h1v1h-1zM53 626h1v1h-1zM53 637h1v1h-1zM53 648h1v1h-1zM53 659h1v1h-1zM53 670h1v1h-1zM53 680h1v1h-1zM53 691h1v1h-1zM53 702h1v1h-1zM53 713h1v1h-1zM53 724h1v1h-1zM53 735h1v1h-1zM53 745h1v1h-1zM53 756h1v1h-1zM53 767h1v1h-1zM53 778h1v1h-1zM53 789h1v1h-1zM53 800h1v1h-1zM53 810h1v1h-1zM53 821h1v1h-1zM53 832h1v1h-1zM53 843h1v1h-1zM64 540h1v1h-1zM64 551h1v1h-1zM64 561h1v1h-1zM64 572h1v1h-1zM64 583h1v1h-1zM64 594h1v1h-1zM64 605h1v1h-1zM64 616h1v1h-1zM64 626h1v1h-1zM64 637h1v1h-1zM64 648h1v1h-1zM64 659h1v1h-1zM64 670h1v1h-1zM64 680h1v1h-1zM64 691h1v1h-1zM64 702h1v1h-1zM64 713h1v1h-1zM64 724h1v1h-1zM64 735h1v1h-1zM64 745h1v1h-1zM64 756h1v1h-1zM64 767h1v1h-1zM64 778h1v1h-1zM64 789h1v1h-1zM64 800h1v1h-1zM64 810h1v1h-1zM64 821h1v1h-1zM64 832h1v1h-1zM64 843h1v1h-1zM75 540h1v1h-1zM75 551h1v1h-1zM75 561h1v1h-1zM75 572h1v1h-1zM75 583h1v1h-1zM75 594h1v1h-1zM75 605h1v1h-1zM75 616h1v1h-1zM75 626h1v1h-1zM75 637h1v1h-1zM75 648h1v1h-1zM75 659h1v1h-1zM75 670h1v1h-1zM75 680h1v1h-1zM75 691h1v1h-1zM75 702h1v1h-1zM75 713h1v1h-1zM75 724h1v1h-1zM75 735h1v1h-1zM75 745h1v1h-1zM75 756h1v1h-1zM75 767h1v1h-1zM75 778h1v1h-1zM75 789h1v1h-1zM75 800h1v1h-1zM75 810h1v1h-1zM75 821h1v1h-1zM75 832h1v1h-1zM75 843h1v1h-1zM86 540h1v1h-1zM86 551h1v1h-1zM86 561h1v1h-1zM86 572h1v1h-1zM86 583h1v1h-1zM86 594h1v1h-1zM86 605h1v1h-1zM86 616h1v1h-1zM86 626h1v1h-1zM86 637h1v1h-1zM86 648h1v1h-1zM86 659h1v1h-1zM86 670h1v1h-1zM86 680h1v1h-1zM86 691h1v1h-1zM86 702h1v1h-1zM86 713h1v1h-1zM86 724h1v1h-1zM86 735h1v1h-1zM86 745h1v1h-1zM86 756h1v1h-1zM86 767h1v1h-1zM86 778h1v1h-1zM86 789h1v1h-1zM86 800h1v1h-1zM86 810h1v1h-1zM86 821h1v1h-1zM86 832h1v1h-1zM86 843h1v1h-1zM97 540h1v1h-1zM97 551h1v1h-1zM97 561h1v1h-1zM97 572h1v1h-1zM97 583h1v1h-1zM97 594h1v1h-1zM97 605h1v1h-1zM97 616h1v1h-1zM97 626h1v1h-1zM97 637h1v1h-1zM97 648h1v1h-1zM97 659h1v1h-1zM97 670h1v1h-1zM97 680h1v1h-1zM97 691h1v1h-1zM97 702h1v1h-1zM97 713h1v1h-1zM97 724h1v1h-1zM97 735h1v1h-1zM97 745h1v1h-1zM97 756h1v1h-1zM97 767h1v1h-1zM97 778h1v1h-1zM97 789h1v1h-1zM97 800h1v1h-1zM97 810h1v1h-1zM97 821h1v1h-1zM97 832h1v1h-1zM97 843h1v1h-1zM107 540h1v1h-1zM107 551h1v1h-1zM107 561h1v1h-1zM107 572h1v1h-1zM107 583h1v1h-1zM107 594h1v1h-1zM107 605h1v1h-1zM107 616h1v1h-1zM107 626h1v1h-1zM107 637h1v1h-1zM107 648h1v1h-1zM107 659h1v1h-1zM107 670h1v1h-1zM107 680h1v1h-1zM107 691h1v1h-1zM107 702h1v1h-1zM107 713h1v1h-1zM107 724h1v1h-1zM107 735h1v1h-1zM107 745h1v1h-1zM107 756h1v1h-1zM107 767h1v1h-1zM107 778h1v1h-1zM107 789h1v1h-1zM107 800h1v1h-1zM107 810h1v1h-1zM107 821h1v1h-1zM107 832h1v1h-1zM107 843h1v1h-1zM118 540h1v1h-1zM118 551h1v1h-1zM118 561h1v1h-1zM118 572h1v1h-1zM118 583h1v1h-1zM118 594h1v1h-1zM118 605h1v1h-1zM118 616h1v1h-1zM118 626h1v1h-1zM118 637h1v1h-1zM118 648h1v1h-1zM118 659h1v1h-1zM118 670h1v1h-1zM118 680h1v1h-1zM118 691h1v1h-1zM118 702h1v1h-1zM118 713h1v1h-1zM118 724h1v1h-1zM118 735h1v1h-1zM118 745h1v1h-1zM118 756h1v1h-1zM118 767h1v1h-1zM118 778h1v1h-1zM118 789h1v1h-1zM118 800h1v1h-1zM118 810h1v1h-1zM118 821h1v1h-1zM118 832h1v1h-1zM118 843h1v1h-1zM129 540h1v1h-1zM129 551h1v1h-1zM129 561h1v1h-1zM129 572h1v1h-1zM129 583h1v1h-1zM129 594h1v1h-1zM129 605h1v1h-1zM129 616h1v1h-1zM129 626h1v1h-1zM129 637h1v1h-1zM129 648h1v1h-1zM129 659h1v1h-1zM129 670h1v1h-1zM129 680h1v1h-1zM129 691h1v1h-1zM129 702h1v1h-1zM129 713h1v1h-1zM129 724h1v1h-1zM129 735h1v1h-1zM129 745h1v1h-1zM129 756h1v1h-1zM129 767h1v1h-1zM129 778h1v1h-1zM129 789h1v1h-1zM129 800h1v1h-1zM129 810h1v1h-1zM129 821h1v1h-1zM129 832h1v1h-1zM129 843h1v1h-1zM140 540h1v1h-1zM140 551h1v1h-1zM140 561h1v1h-1zM140 572h1v1h-1zM140 583h1v1h-1zM140 594h1v1h-1zM140 605h1v1h-1zM140 616h1v1h-1zM140 626h1v1h-1zM140 637h1v1h-1zM140 648h1v1h-1zM140 659h1v1h-1zM140 670h1v1h-1zM140 680h1v1h-1zM140 691h1v1h-1zM140 702h1v1h-1zM140 713h1v1h-1zM140 724h1v1h-1zM140 735h1v1h-1zM140 745h1v1h-1zM140 756h1v1h-1zM140 767h1v1h-1zM140 778h1v1h-1zM140 789h1v1h-1zM140 800h1v1h-1zM140 810h1v1h-1zM140 821h1v1h-1zM140 832h1v1h-1zM140 843h1v1h-1zM151 540h1v1h-1zM151 551h1v1h-1zM151 561h1v1h-1zM151 572h1v1h-1zM151 583h1v1h-1zM151 594h1v1h-1zM151 605h1v1h-1zM151 616h1v1h-1zM151 626h1v1h-1zM151 637h1v1h-1zM151 648h1v1h-1zM151 659h1v1h-1zM151 670h1v1h-1zM151 680h1v1h-1zM151 691h1v1h-1zM151 702h1v1h-1zM151 713h1v1h-1zM151 724h1v1h-1zM151 735h1v1h-1zM151 745h1v1h-1zM151 756h1v1h-1zM151 767h1v1h-1zM151 778h1v1h-1zM151 789h1v1h-1zM151 800h1v1h-1zM151 810h1v1h-1zM151 821h1v1h-1zM151 832h1v1h-1zM151 843h1v1h-1zM161 540h1v1h-1zM161 551h1v1h-1zM161 561h1v1h-1zM161 572h1v1h-1zM161 583h1v1h-1zM161 594h1v1h-1zM161 605h1v1h-1zM161 616h1v1h-1zM161 626h1v1h-1zM161 637h1v1h-1zM161 648h1v1h-1zM161 659h1v1h-1zM161 670h1v1h-1zM161 680h1v1h-1zM161 691h1v1h-1zM161 702h1v1h-1zM161 713h1v1h-1zM161 724h1v1h-1zM161 735h1v1h-1zM161 745h1v1h-1zM161 756h1v1h-1zM161 767h1v1h-1zM161 778h1v1h-1zM161 789h1v1h-1zM161 800h1v1h-1zM161 810h1v1h-1zM161 821h1v1h-1zM161 832h1v1h-1zM161 843h1v1h-1zM172 540h1v1h-1zM172 551h1v1h-1zM172 561h1v1h-1zM172 572h1v1h-1zM172 583h1v1h-1zM172 594h1v1h-1zM172 605h1v1h-1zM172 616h1v1h-1zM172 626h1v1h-1zM172 637h1v1h-1zM172 648h1v1h-1zM172 659h1v1h-1zM172 670h1v1h-1zM172 680h1v1h-1zM172 691h1v1h-1zM172 702h1v1h-1zM172 713h1v1h-1zM172 724h1v1h-1zM172 735h1v1h-1zM172 745h1v1h-1zM172 756h1v1h-1zM172 767h1v1h-1zM172 778h1v1h-1zM172 789h1v1h-1zM172 800h1v1h-1zM172 810h1v1h-1zM172 821h1v1h-1zM172 832h1v1h-1zM172 843h1v1h-1zM183 540h1v1h-1zM183 551h1v1h-1zM183 561h1v1h-1zM183 572h1v1h-1zM183 583h1v1h-1zM183 594h1v1h-1zM183 605h1v1h-1zM183 616h1v1h-1zM183 626h1v1h-1zM183 637h1v1h-1zM183 648h1v1h-1zM183 659h1v1h-1zM183 670h1v1h-1zM183 680h1v1h-1zM183 691h1v1h-1zM183 702h1v1h-1zM183 713h1v1h-1zM183 724h1v1h-1zM183 735h1v1h-1zM183 745h1v1h-1zM183 756h1v1h-1zM183 767h1v1h-1zM183 778h1v1h-1zM183 789h1v1h-1zM183 800h1v1h-1zM183 810h1v1h-1zM183 821h1v1h-1zM183 832h1v1h-1zM183 843h1v1h-1zM194 540h1v1h-1zM194 551h1v1h-1zM194 561h1v1h-1zM194 572h1v1h-1zM194 583h1v1h-1zM194 594h1v1h-1zM194 605h1v1h-1zM194 616h1v1h-1zM194 626h1v1h-1zM194 637h1v1h-1zM194 648h1v1h-1zM194 659h1v1h-1zM194 670h1v1h-1zM194 680h1v1h-1zM194 691h1v1h-1zM194 702h1v1h-1zM194 713h1v1h-1zM194 724h1v1h-1zM194 735h1v1h-1zM194 745h1v1h-1zM194 756h1v1h-1zM194 767h1v1h-1zM194 778h1v1h-1zM194 789h1v1h-1zM194 800h1v1h-1zM194 810h1v1h-1zM194 821h1v1h-1zM194 832h1v1h-1zM194 843h1v1h-1zM205 540h1v1h-1zM205 551h1v1h-1zM205 561h1v1h-1zM205 572h1v1h-1zM205 583h1v1h-1zM205 594h1v1h-1zM205 605h1v1h-1zM205 616h1v1h-1zM205 626h1v1h-1zM205 637h1v1h-1zM205 648h1v1h-1zM205 659h1v1h-1zM205 670h1v1h-1zM205 680h1v1h-1zM205 691h1v1h-1zM205 702h1v1h-1zM205 713h1v1h-1zM205 724h1v1h-1zM205 735h1v1h-1zM205 745h1v1h-1zM205 756h1v1h-1zM205 767h1v1h-1zM205 778h1v1h-1zM205 789h1v1h-1zM205 800h1v1h-1zM205 810h1v1h-1zM205 821h1v1h-1zM205 832h1v1h-1zM205 843h1v1h-1zM216 540h1v1h-1zM216 551h1v1h-1zM216 561h1v1h-1zM216 572h1v1h-1zM216 583h1v1h-1zM216 594h1v1h-1zM216 605h1v1h-1zM216 616h1v1h-1zM216 626h1v1h-1zM216 637h1v1h-1zM216 648h1v1h-1zM216 659h1v1h-1zM216 670h1v1h-1zM216 680h1v1h-1zM216 691h1v1h-1zM216 702h1v1h-1zM216 713h1v1h-1zM216 724h1v1h-1zM216 735h1v1h-1zM216 745h1v1h-1zM216 756h1v1h-1zM216 767h1v1h-1zM216 778h1v1h-1zM216 789h1v1h-1zM216 800h1v1h-1zM216 810h1v1h-1zM216 821h1v1h-1zM216 832h1v1h-1zM216 843h1v1h-1zM226 540h1v1h-1zM226 551h1v1h-1zM226 561h1v1h-1zM226 572h1v1h-1zM226 583h1v1h-1zM226 594h1v1h-1zM226 605h1v1h-1zM226 616h1v1h-1zM226 626h1v1h-1zM226 637h1v1h-1zM226 648h1v1h-1zM226 659h1v1h-1zM226 670h1v1h-1zM226 680h1v1h-1zM226 691h1v1h-1zM226 702h1v1h-1zM226 713h1v1h-1zM226 724h1v1h-1zM226 735h1v1h-1zM226 745h1v1h-1zM226 756h1v1h-1zM226 767h1v1h-1zM226 778h1v1h-1zM226 789h1v1h-1zM226 800h1v1h-1zM226 810h1v1h-1zM226 821h1v1h-1zM226 832h1v1h-1zM226 843h1v1h-1zM237 540h1v1h-1zM237 551h1v1h-1zM237 561h1v1h-1zM237 572h1v1h-1zM237 583h1v1h-1zM237 594h1v1h-1zM237 605h1v1h-1zM237 616h1v1h-1zM237 626h1v1h-1zM237 637h1v1h-1zM237 648h1v1h-1zM237 659h1v1h-1zM237 670h1v1h-1zM237 680h1v1h-1zM237 691h1v1h-1zM237 702h1v1h-1zM237 713h1v1h-1zM237 724h1v1h-1zM237 735h1v1h-1zM237 745h1v1h-1zM237 756h1v1h-1zM237 767h1v1h-1zM237 778h1v1h-1zM237 789h1v1h-1zM237 800h1v1h-1zM237 810h1v1h-1zM237 821h1v1h-1zM237 832h1v1h-1zM237 843h1v1h-1zM248 540h1v1h-1zM248 551h1v1h-1zM248 561h1v1h-1zM248 572h1v1h-1zM248 583h1v1h-1zM248 594h1v1h-1zM248 605h1v1h-1zM248 616h1v1h-1zM248 626h1v1h-1zM248 637h1v1h-1zM248 648h1v1h-1zM248 659h1v1h-1zM248 670h1v1h-1zM248 680h1v1h-1zM248 691h1v1h-1zM248 702h1v1h-1zM248 713h1v1h-1zM248 724h1v1h-1zM248 735h1v1h-1zM248 745h1v1h-1zM248 756h1v1h-1zM248 767h1v1h-1zM248 778h1v1h-1zM248 789h1v1h-1zM248 800h1v1h-1zM248 810h1v1h-1zM248 821h1v1h-1zM248 832h1v1h-1zM248 843h1v1h-1zM259 540h1v1h-1zM259 551h1v1h-1zM259 561h1v1h-1zM259 572h1v1h-1zM259 583h1v1h-1zM259 594h1v1h-1zM259 605h1v1h-1zM259 616h1v1h-1zM259 626h1v1h-1zM259 637h1v1h-1zM259 648h1v1h-1zM259 659h1v1h-1zM259 670h1v1h-1zM259 680h1v1h-1zM259 691h1v1h-1zM259 702h1v1h-1zM259 713h1v1h-1zM259 724h1v1h-1zM259 735h1v1h-1zM259 745h1v1h-1zM259 756h1v1h-1zM259 767h1v1h-1zM259 778h1v1h-1zM259 789h1v1h-1zM259 800h1v1h-1zM259 810h1v1h-1zM259 821h1v1h-1zM259 832h1v1h-1zM259 843h1v1h-1zM270 540h1v1h-1zM270 551h1v1h-1zM270 561h1v1h-1zM270 572h1v1h-1zM270 583h1v1h-1zM270 594h1v1h-1zM270 605h1v1h-1zM270 616h1v1h-1zM270 626h1v1h-1zM270 637h1v1h-1zM270 648h1v1h-1zM270 659h1v1h-1zM270 670h1v1h-1zM270 680h1v1h-1zM270 691h1v1h-1zM270 702h1v1h-1zM270 713h1v1h-1zM270 724h1v1h-1zM270 735h1v1h-1zM270 745h1v1h-1zM270 756h1v1h-1zM270 767h1v1h-1zM270 778h1v1h-1zM270 789h1v1h-1zM270 800h1v1h-1zM270 810h1v1h-1zM270 821h1v1h-1zM270 832h1v1h-1zM270 843h1v1h-1zM281 540h1v1h-1zM281 551h1v1h-1zM281 561h1v1h-1zM281 572h1v1h-1zM281 583h1v1h-1zM281 594h1v1h-1zM281 605h1v1h-1zM281 616h1v1h-1zM281 626h1v1h-1zM281 637h1v1h-1zM281 648h1v1h-1zM281 659h1v1h-1zM281 670h1v1h-1zM281 680h1v1h-1zM281 691h1v1h-1zM281 702h1v1h-1zM281 713h1v1h-1zM281 724h1v1h-1zM281 735h1v1h-1zM281 745h1v1h-1zM281 756h1v1h-1zM281 767h1v1h-1zM281 778h1v1h-1zM281 789h1v1h-1zM281 800h1v1h-1zM281 810h1v1h-1zM281 821h1v1h-1zM281 832h1v1h-1zM281 843h1v1h-1zM291 540h1v1h-1zM291 551h1v1h-1zM291 561h1v1h-1zM291 572h1v1h-1zM291 583h1v1h-1zM291 594h1v1h-1zM291 605h1v1h-1zM291 616h1v1h-1zM291 626h1v1h-1zM291 637h1v1h-1zM291 648h1v1h-1zM291 659h1v1h-1zM291 670h1v1h-1zM291 680h1v1h-1zM291 691h1v1h-1zM291 702h1v1h-1zM291 713h1v1h-1zM291 724h1v1h-1zM291 735h1v1h-1zM291 745h1v1h-1zM291 756h1v1h-1zM291 767h1v1h-1zM291 778h1v1h-1zM291 789h1v1h-1zM291 800h1v1h-1zM291 810h1v1h-1zM291 821h1v1h-1zM291 832h1v1h-1zM291 843h1v1h-1zM302 540h1v1h-1zM302 551h1v1h-1zM302 561h1v1h-1zM302 572h1v1h-1zM302 583h1v1h-1zM302 594h1v1h-1zM302 605h1v1h-1zM302 616h1v1h-1zM302 626h1v1h-1zM302 637h1v1h-1zM302 648h1v1h-1zM302 659h1v1h-1zM302 670h1v1h-1zM302 680h1v1h-1zM302 691h1v1h-1zM302 702h1v1h-1zM302 713h1v1h-1zM302 724h1v1h-1zM302 735h1v1h-1zM302 745h1v1h-1zM302 756h1v1h-1zM302 767h1v1h-1zM302 778h1v1h-1zM302 789h1v1h-1zM302 800h1v1h-1zM302 810h1v1h-1zM302 821h1v1h-1zM302 832h1v1h-1zM302 843h1v1h-1zM313 540h1v1h-1zM313 551h1v1h-1zM313 561h1v1h-1zM313 572h1v1h-1zM313 583h1v1h-1zM313 594h1v1h-1zM313 605h1v1h-1zM313 616h1v1h-1zM313 626h1v1h-1zM313 637h1v1h-1zM313 648h1v1h-1zM313 659h1v1h-1zM313 670h1v1h-1zM313 680h1v1h-1zM313 691h1v1h-1zM313 702h1v1h-1zM313 713h1v1h-1zM313 724h1v1h-1zM313 735h1v1h-1zM313 745h1v1h-1zM313 756h1v1h-1zM313 767h1v1h-1zM313 778h1v1h-1zM313 789h1v1h-1zM313 800h1v1h-1zM313 810h1v1h-1zM313 821h1v1h-1zM313 832h1v1h-1zM313 843h1v1h-1zM324 540h1v1h-1zM324 551h1v1h-1zM324 561h1v1h-1zM324 572h1v1h-1zM324 583h1v1h-1zM324 594h1v1h-1zM324 605h1v1h-1zM324 616h1v1h-1zM324 626h1v1h-1zM324 637h1v1h-1zM324 648h1v1h-1zM324 659h1v1h-1zM324 670h1v1h-1zM324 680h1v1h-1zM324 691h1v1h-1zM324 702h1v1h-1zM324 713h1v1h-1zM324 724h1v1h-1zM324 735h1v1h-1zM324 745h1v1h-1zM324 756h1v1h-1zM324 767h1v1h-1zM324 778h1v1h-1zM324 789h1v1h-1zM324 800h1v1h-1zM324 810h1v1h-1zM324 821h1v1h-1zM324 832h1v1h-1zM324 843h1v1h-1zM335 540h1v1h-1zM335 551h1v1h-1zM335 561h1v1h-1zM335 572h1v1h-1zM335 583h1v1h-1zM335 594h1v1h-1zM335 605h1v1h-1zM335 616h1v1h-1zM335 626h1v1h-1zM335 637h1v1h-1zM335 648h1v1h-1zM335 659h1v1h-1zM335 670h1v1h-1zM335 680h1v1h-1zM335 691h1v1h-1zM335 702h1v1h-1zM335 713h1v1h-1zM335 724h1v1h-1zM335 735h1v1h-1zM335 745h1v1h-1zM335 756h1v1h-1zM335 767h1v1h-1zM335 778h1v1h-1zM335 789h1v1h-1zM335 800h1v1h-1zM335 810h1v1h-1zM335 821h1v1h-1zM335 832h1v1h-1zM335 843h1v1h-1zM346 540h1v1h-1zM346 551h1v1h-1zM346 561h1v1h-1zM346 572h1v1h-1zM346 583h1v1h-1zM346 594h1v1h-1zM346 605h1v1h-1zM346 616h1v1h-1zM346 626h1v1h-1zM346 637h1v1h-1zM346 648h1v1h-1zM346 659h1v1h-1zM346 670h1v1h-1zM346 680h1v1h-1zM346 691h1v1h-1zM346 702h1v1h-1zM346 713h1v1h-1zM346 724h1v1h-1zM346 735h1v1h-1zM346 745h1v1h-1zM346 756h1v1h-1zM346 767h1v1h-1zM346 778h1v1h-1zM346 789h1v1h-1zM346 800h1v1h-1zM346 810h1v1h-1zM346 821h1v1h-1zM346 832h1v1h-1zM346 843h1v1h-1zM356 540h1v1h-1zM356 551h1v1h-1zM356 561h1v1h-1zM356 572h1v1h-1zM356 583h1v1h-1zM356 594h1v1h-1zM356 605h1v1h-1zM356 616h1v1h-1zM356 626h1v1h-1zM356 637h1v1h-1zM356 648h1v1h-1zM356 659h1v1h-1zM356 670h1v1h-1zM356 680h1v1h-1zM356 691h1v1h-1zM356 702h1v1h-1zM356 713h1v1h-1zM356 724h1v1h-1zM356 735h1v1h-1zM356 745h1v1h-1zM356 756h1v1h-1zM356 767h1v1h-1zM356 778h1v1h-1zM356 789h1v1h-1zM356 800h1v1h-1zM356 810h1v1h-1zM356 821h1v1h-1zM356 832h1v1h-1zM356 843h1v1h-1zM367 540h1v1h-1zM367 551h1v1h-1zM367 561h1v1h-1zM367 572h1v1h-1zM367 583h1v1h-1zM367 594h1v1h-1zM367 605h1v1h-1zM367 616h1v1h-1zM367 626h1v1h-1zM367 637h1v1h-1zM367 648h1v1h-1zM367 659h1v1h-1zM367 670h1v1h-1zM367 680h1v1h-1zM367 691h1v1h-1zM367 702h1v1h-1zM367 713h1v1h-1zM367 724h1v1h-1zM367 735h1v1h-1zM367 745h1v1h-1zM367 756h1v1h-1zM367 767h1v1h-1zM367 778h1v1h-1zM367 789h1v1h-1zM367 800h1v1h-1zM367 810h1v1h-1zM367 821h1v1h-1zM367 832h1v1h-1zM367 843h1v1h-1zM378 540h1v1h-1zM378 551h1v1h-1zM378 561h1v1h-1zM378 572h1v1h-1zM378 583h1v1h-1zM378 594h1v1h-1zM378 605h1v1h-1zM378 616h1v1h-1zM378 626h1v1h-1zM378 637h1v1h-1zM378 648h1v1h-1zM378 659h1v1h-1zM378 670h1v1h-1zM378 680h1v1h-1zM378 691h1v1h-1zM378 702h1v1h-1zM378 713h1v1h-1zM378 724h1v1h-1zM378 735h1v1h-1zM378 745h1v1h-1zM378 756h1v1h-1zM378 767h1v1h-1zM378 778h1v1h-1zM378 789h1v1h-1zM378 800h1v1h-1zM378 810h1v1h-1zM378 821h1v1h-1zM378 832h1v1h-1zM378 843h1v1h-1zM389 540h1v1h-1zM389 551h1v1h-1zM389 561h1v1h-1zM389 572h1v1h-1zM389 583h1v1h-1zM389 594h1v1h-1zM389 605h1v1h-1zM389 616h1v1h-1zM389 626h1v1h-1zM389 637h1v1h-1zM389 648h1v1h-1zM389 659h1v1h-1zM389 670h1v1h-1zM389 680h1v1h-1zM389 691h1v1h-1zM389 702h1v1h-1zM389 713h1v1h-1zM389 724h1v1h-1zM389 735h1v1h-1zM389 745h1v1h-1zM389 756h1v1h-1zM389 767h1v1h-1zM389 778h1v1h-1zM389 789h1v1h-1zM389 800h1v1h-1zM389 810h1v1h-1zM389 821h1v1h-1zM389 832h1v1h-1zM389 843h1v1h-1zM400 540h1v1h-1zM400 551h1v1h-1zM400 561h1v1h-1zM400 572h1v1h-1zM400 583h1v1h-1zM400 594h1v1h-1zM400 605h1v1h-1zM400 616h1v1h-1zM400 626h1v1h-1zM400 637h1v1h-1zM400 648h1v1h-1zM400 659h1v1h-1zM400 670h1v1h-1zM400 680h1v1h-1zM400 691h1v1h-1zM400 702h1v1h-1zM400 713h1v1h-1zM400 724h1v1h-1zM400 735h1v1h-1zM400 745h1v1h-1zM400 756h1v1h-1zM400 767h1v1h-1zM400 778h1v1h-1zM400 789h1v1h-1zM400 800h1v1h-1zM400 810h1v1h-1zM400 821h1v1h-1zM400 832h1v1h-1zM400 843h1v1h-1zM411 540h1v1h-1zM411 551h1v1h-1zM411 561h1v1h-1zM411 572h1v1h-1zM411 583h1v1h-1zM411 594h1v1h-1zM411 605h1v1h-1zM411 616h1v1h-1zM411 626h1v1h-1zM411 637h1v1h-1zM411 648h1v1h-1zM411 659h1v1h-1zM411 670h1v1h-1zM411 680h1v1h-1zM411 691h1v1h-1zM411 702h1v1h-1zM411 713h1v1h-1zM411 724h1v1h-1zM411 735h1v1h-1zM411 745h1v1h-1zM411 756h1v1h-1zM411 767h1v1h-1zM411 778h1v1h-1zM411 789h1v1h-1zM411 800h1v1h-1zM411 810h1v1h-1zM411 821h1v1h-1zM411 832h1v1h-1zM411 843h1v1h-1zM421 540h1v1h-1zM421 551h1v1h-1zM421 561h1v1h-1zM421 572h1v1h-1zM421 583h1v1h-1zM421 594h1v1h-1zM421 605h1v1h-1zM421 616h1v1h-1zM421 626h1v1h-1zM421 637h1v1h-1zM421 648h1v1h-1zM421 659h1v1h-1zM421 670h1v1h-1zM421 680h1v1h-1zM421 691h1v1h-1zM421 702h1v1h-1zM421 713h1v1h-1zM421 724h1v1h-1zM421 735h1v1h-1zM421 745h1v1h-1zM421 756h1v1h-1zM421 767h1v1h-1zM421 778h1v1h-1zM421 789h1v1h-1zM421 800h1v1h-1zM421 810h1v1h-1zM421 821h1v1h-1zM421 832h1v1h-1zM421 843h1v1h-1zM432 540h1v1h-1zM432 551h1v1h-1zM432 561h1v1h-1zM432 572h1v1h-1zM432 583h1v1h-1zM432 594h1v1h-1zM432 605h1v1h-1zM432 616h1v1h-1zM432 626h1v1h-1zM432 637h1v1h-1zM432 648h1v1h-1zM432 659h1v1h-1zM432 670h1v1h-1zM432 680h1v1h-1zM432 691h1v1h-1zM432 702h1v1h-1zM432 713h1v1h-1zM432 724h1v1h-1zM432 735h1v1h-1zM432 745h1v1h-1zM432 756h1v1h-1zM432 767h1v1h-1zM432 778h1v1h-1zM432 789h1v1h-1zM432 800h1v1h-1zM432 810h1v1h-1zM432 821h1v1h-1zM432 832h1v1h-1zM432 843h1v1h-1zM443 540h1v1h-1zM443 551h1v1h-1zM443 561h1v1h-1zM443 572h1v1h-1zM443 583h1v1h-1zM443 594h1v1h-1zM443 605h1v1h-1zM443 616h1v1h-1zM443 626h1v1h-1zM443 637h1v1h-1zM443 648h1v1h-1zM443 659h1v1h-1zM443 670h1v1h-1zM443 680h1v1h-1zM443 691h1v1h-1zM443 702h1v1h-1zM443 713h1v1h-1zM443 724h1v1h-1zM443 735h1v1h-1zM443 745h1v1h-1zM443 756h1v1h-1zM443 767h1v1h-1zM443 778h1v1h-1zM443 789h1v1h-1zM443 800h1v1h-1zM443 810h1v1h-1zM443 821h1v1h-1zM443 832h1v1h-1zM443 843h1v1h-1zM454 540h1v1h-1zM454 551h1v1h-1zM454 561h1v1h-1zM454 572h1v1h-1zM454 583h1v1h-1zM454 594h1v1h-1zM454 605h1v1h-1zM454 616h1v1h-1zM454 626h1v1h-1zM454 637h1v1h-1zM454 648h1v1h-1zM454 659h1v1h-1zM454 670h1v1h-1zM454 680h1v1h-1zM454 691h1v1h-1zM454 702h1v1h-1zM454 713h1v1h-1zM454 724h1v1h-1zM454 735h1v1h-1zM454 745h1v1h-1zM454 756h1v1h-1zM454 767h1v1h-1zM454 778h1v1h-1zM454 789h1v1h-1zM454 800h1v1h-1zM454 810h1v1h-1zM454 821h1v1h-1zM454 832h1v1h-1zM454 843h1v1h-1zM465 540h1v1h-1zM465 551h1v1h-1zM465 561h1v1h-1zM465 572h1v1h-1zM465 583h1v1h-1zM465 594h1v1h-1zM465 605h1v1h-1zM465 616h1v1h-1zM465 626h1v1h-1zM465 637h1v1h-1zM465 648h1v1h-1zM465 659h1v1h-1zM465 670h1v1h-1zM465 680h1v1h-1zM465 691h1v1h-1zM465 702h1v1h-1zM465 713h1v1h-1zM465 724h1v1h-1zM465 735h1v1h-1zM465 745h1v1h-1zM465 756h1v1h-1zM465 767h1v1h-1zM465 778h1v1h-1zM465 789h1v1h-1zM465 800h1v1h-1zM465 810h1v1h-1zM465 821h1v1h-1zM465 832h1v1h-1zM465 843h1v1h-1zM476 540h1v1h-1zM476 551h1v1h-1zM476 561h1v1h-1zM476 572h1v1h-1zM476 583h1v1h-1zM476 594h1v1h-1zM476 605h1v1h-1zM476 616h1v1h-1zM476 626h1v1h-1zM476 637h1v1h-1zM476 648h1v1h-1zM476 659h1v1h-1zM476 670h1v1h-1zM476 680h1v1h-1zM476 691h1v1h-1zM476 702h1v1h-1zM476 713h1v1h-1zM476 724h1v1h-1zM476 735h1v1h-1zM476 745h1v1h-1zM476 756h1v1h-1zM476 767h1v1h-1zM476 778h1v1h-1zM476 789h1v1h-1zM476 800h1v1h-1zM476 810h1v1h-1zM476 821h1v1h-1zM476 832h1v1h-1zM476 843h1v1h-1zM486 540h1v1h-1zM486 551h1v1h-1zM486 561h1v1h-1zM486 572h1v1h-1zM486 583h1v1h-1zM486 594h1v1h-1zM486 605h1v1h-1zM486 616h1v1h-1zM486 626h1v1h-1zM486 637h1v1h-1zM486 648h1v1h-1zM486 659h1v1h-1zM486 670h1v1h-1zM486 680h1v1h-1zM486 691h1v1h-1zM486 702h1v1h-1zM486 713h1v1h-1zM486 724h1v1h-1zM486 735h1v1h-1zM486 745h1v1h-1zM486 756h1v1h-1zM486 767h1v1h-1zM486 778h1v1h-1zM486 789h1v1h-1zM486 800h1v1h-1zM486 810h1v1h-1zM486 821h1v1h-1zM486 832h1v1h-1zM486 843h1v1h-1zM497 540h1v1h-1zM497 551h1v1h-1zM497 561h1v1h-1zM497 572h1v1h-1zM497 583h1v1h-1zM497 594h1v1h-1zM497 605h1v1h-1zM497 616h1v1h-1zM497 626h1v1h-1zM497 637h1v1h-1zM497 648h1v1h-1zM497 659h1v1h-1zM497 670h1v1h-1zM497 680h1v1h-1zM497 691h1v1h-1zM497 702h1v1h-1zM497 713h1v1h-1zM497 724h1v1h-1zM497 735h1v1h-1zM497 745h1v1h-1zM497 756h1v1h-1zM497 767h1v1h-1zM497 778h1v1h-1zM497 789h1v1h-1zM497 800h1v1h-1zM497 810h1v1h-1zM497 821h1v1h-1zM497 832h1v1h-1zM497 843h1v1h-1zM508 540h1v1h-1zM508 551h1v1h-1zM508 561h1v1h-1zM508 572h1v1h-1zM508 583h1v1h-1zM508 594h1v1h-1zM508 605h1v1h-1zM508 616h1v1h-1zM508 626h1v1h-1zM508 637h1v1h-1zM508 648h1v1h-1zM508 659h1v1h-1zM508 670h1v1h-1zM508 680h1v1h-1zM508 691h1v1h-1zM508 702h1v1h-1zM508 713h1v1h-1zM508 724h1v1h-1zM508 735h1v1h-1zM508 745h1v1h-1zM508 756h1v1h-1zM508 767h1v1h-1zM508 778h1v1h-1zM508 789h1v1h-1zM508 800h1v1h-1zM508 810h1v1h-1zM508 821h1v1h-1zM508 832h1v1h-1zM508 843h1v1h-1zM519 540h1v1h-1zM519 551h1v1h-1zM519 561h1v1h-1zM519 572h1v1h-1zM519 583h1v1h-1zM519 594h1v1h-1zM519 605h1v1h-1zM519 616h1v1h-1zM519 626h1v1h-1zM519 637h1v1h-1zM519 648h1v1h-1zM519 659h1v1h-1zM519 670h1v1h-1zM519 680h1v1h-1zM519 691h1v1h-1zM519 702h1v1h-1zM519 713h1v1h-1zM519 724h1v1h-1zM519 735h1v1h-1zM519 745h1v1h-1zM519 756h1v1h-1zM519 767h1v1h-1zM519 778h1v1h-1zM519 789h1v1h-1zM519 800h1v1h-1zM519 810h1v1h-1zM519 821h1v1h-1zM519 832h1v1h-1zM519 843h1v1h-1zM530 540h1v1h-1zM530 551h1v1h-1zM530 561h1v1h-1zM530 572h1v1h-1zM530 583h1v1h-1zM530 594h1v1h-1zM530 605h1v1h-1zM530 616h1v1h-1zM530 626h1v1h-1zM530 637h1v1h-1zM530 648h1v1h-1zM530 659h1v1h-1zM530 670h1v1h-1zM530 680h1v1h-1zM530 691h1v1h-1zM530 702h1v1h-1zM530 713h1v1h-1zM530 724h1v1h-1zM530 735h1v1h-1zM530 745h1v1h-1zM530 756h1v1h-1zM530 767h1v1h-1zM530 778h1v1h-1zM530 789h1v1h-1zM530 800h1v1h-1zM530 810h1v1h-1zM530 821h1v1h-1zM530 832h1v1h-1zM530 843h1v1h-1zM541 540h1v1h-1zM541 551h1v1h-1zM541 561h1v1h-1zM541 572h1v1h-1zM541 583h1v1h-1zM541 594h1v1h-1zM541 605h1v1h-1zM541 616h1v1h-1zM541 626h1v1h-1zM541 637h1v1h-1zM541 648h1v1h-1zM541 659h1v1h-1zM541 670h1v1h-1zM541 680h1v1h-1zM541 691h1v1h-1zM541 702h1v1h-1zM541 713h1v1h-1zM541 724h1v1h-1zM541 735h1v1h-1zM541 745h1v1h-1zM541 756h1v1h-1zM541 767h1v1h-1zM541 778h1v1h-1zM541 789h1v1h-1zM541 800h1v1h-1zM541 810h1v1h-1zM541 821h1v1h-1zM541 832h1v1h-1zM541 843h1v1h-1zM551 540h1v1h-1zM551 551h1v1h-1zM551 561h1v1h-1zM551 572h1v1h-1zM551 583h1v1h-1zM551 594h1v1h-1zM551 605h1v1h-1zM551 616h1v1h-1zM551 626h1v1h-1zM551 637h1v1h-1zM551 648h1v1h-1zM551 659h1v1h-1zM551 670h1v1h-1zM551 680h1v1h-1zM551 691h1v1h-1zM551 702h1v1h-1zM551 713h1v1h-1zM551 724h1v1h-1zM551 735h1v1h-1zM551 745h1v1h-1zM551 756h1v1h-1zM551 767h1v1h-1zM551 778h1v1h-1zM551 789h1v1h-1zM551 800h1v1h-1zM551 810h1v1h-1zM551 821h1v1h-1zM551 832h1v1h-1zM551 843h1v1h-1zM562 540h1v1h-1zM562 551h1v1h-1zM562 561h1v1h-1zM562 572h1v1h-1zM562 583h1v1h-1zM562 594h1v1h-1zM562 605h1v1h-1zM562 616h1v1h-1zM562 626h1v1h-1zM562 637h1v1h-1zM562 648h1v1h-1zM562 659h1v1h-1zM562 670h1v1h-1zM562 680h1v1h-1zM562 691h1v1h-1zM562 702h1v1h-1zM562 713h1v1h-1zM562 724h1v1h-1zM562 735h1v1h-1zM562 745h1v1h-1zM562 756h1v1h-1zM562 767h1v1h-1zM562 778h1v1h-1zM562 789h1v1h-1zM562 800h1v1h-1zM562 810h1v1h-1zM562 821h1v1h-1zM562 832h1v1h-1zM562 843h1v1h-1zM573 540h1v1h-1zM573 551h1v1h-1zM573 561h1v1h-1zM573 572h1v1h-1zM573 583h1v1h-1zM573 594h1v1h-1zM573 605h1v1h-1zM573 616h1v1h-1zM573 626h1v1h-1zM573 637h1v1h-1zM573 648h1v1h-1zM573 659h1v1h-1zM573 670h1v1h-1zM573 680h1v1h-1zM573 691h1v1h-1zM573 702h1v1h-1zM573 713h1v1h-1zM573 724h1v1h-1zM573 735h1v1h-1zM573 745h1v1h-1zM573 756h1v1h-1zM573 767h1v1h-1zM573 778h1v1h-1zM573 789h1v1h-1zM573 800h1v1h-1zM573 810h1v1h-1zM573 821h1v1h-1zM573 832h1v1h-1zM573 843h1v1h-1zM584 540h1v1h-1zM584 551h1v1h-1zM584 561h1v1h-1zM584 572h1v1h-1zM584 583h1v1h-1zM584 594h1v1h-1zM584 605h1v1h-1zM584 616h1v1h-1zM584 626h1v1h-1zM584 637h1v1h-1zM584 648h1v1h-1zM584 659h1v1h-1zM584 670h1v1h-1zM584 680h1v1h-1zM584 691h1v1h-1zM584 702h1v1h-1zM584 713h1v1h-1zM584 724h1v1h-1zM584 735h1v1h-1zM584 745h1v1h-1zM584 756h1v1h-1zM584 767h1v1h-1zM584 778h1v1h-1zM584 789h1v1h-1zM584 800h1v1h-1zM584 810h1v1h-1zM584 821h1v1h-1zM584 832h1v1h-1zM584 843h1v1h-1zM595 540h1v1h-1zM595 551h1v1h-1zM595 561h1v1h-1zM595 572h1v1h-1zM595 583h1v1h-1zM595 594h1v1h-1zM595 605h1v1h-1zM595 616h1v1h-1zM595 626h1v1h-1zM595 637h1v1h-1zM595 648h1v1h-1zM595 659h1v1h-1zM595 670h1v1h-1zM595 680h1v1h-1zM595 691h1v1h-1zM595 702h1v1h-1zM595 713h1v1h-1zM595 724h1v1h-1zM595 735h1v1h-1zM595 745h1v1h-1zM595 756h1v1h-1zM595 767h1v1h-1zM595 778h1v1h-1zM595 789h1v1h-1zM595 800h1v1h-1zM595 810h1v1h-1zM595 821h1v1h-1zM595 832h1v1h-1zM595 843h1v1h-1zM606 540h1v1h-1zM606 551h1v1h-1zM606 561h1v1h-1zM606 572h1v1h-1zM606 583h1v1h-1zM606 594h1v1h-1zM606 605h1v1h-1zM606 616h1v1h-1zM606 626h1v1h-1zM606 637h1v1h-1zM606 648h1v1h-1zM606 659h1v1h-1zM606 670h1v1h-1zM606 680h1v1h-1zM606 691h1v1h-1zM606 702h1v1h-1zM606 713h1v1h-1zM606 724h1v1h-1zM606 735h1v1h-1zM606 745h1v1h-1zM606 756h1v1h-1zM606 767h1v1h-1zM606 778h1v1h-1zM606 789h1v1h-1zM606 800h1v1h-1zM606 810h1v1h-1zM606 821h1v1h-1zM606 832h1v1h-1zM606 843h1v1h-1zM616 540h1v1h-1zM616 551h1v1h-1zM616 561h1v1h-1zM616 572h1v1h-1zM616 583h1v1h-1zM616 594h1v1h-1zM616 605h1v1h-1zM616 616h1v1h-1zM616 626h1v1h-1zM616 637h1v1h-1zM616 648h1v1h-1zM616 659h1v1h-1zM616 670h1v1h-1zM616 680h1v1h-1zM616 691h1v1h-1zM616 702h1v1h-1zM616 713h1v1h-1zM616 724h1v1h-1zM616 735h1v1h-1zM616 745h1v1h-1zM616 756h1v1h-1zM616 767h1v1h-1zM616 778h1v1h-1zM616 789h1v1h-1zM616 800h1v1h-1zM616 810h1v1h-1zM616 821h1v1h-1zM616 832h1v1h-1zM616 843h1v1h-1zM627 540h1v1h-1zM627 551h1v1h-1zM627 561h1v1h-1zM627 572h1v1h-1zM627 583h1v1h-1zM627 594h1v1h-1zM627 605h1v1h-1zM627 616h1v1h-1zM627 626h1v1h-1zM627 637h1v1h-1zM627 648h1v1h-1zM627 659h1v1h-1zM627 670h1v1h-1zM627 680h1v1h-1zM627 691h1v1h-1zM627 702h1v1h-1zM627 713h1v1h-1zM627 724h1v1h-1zM627 735h1v1h-1zM627 745h1v1h-1zM627 756h1v1h-1zM627 767h1v1h-1zM627 778h1v1h-1zM627 789h1v1h-1zM627 800h1v1h-1zM627 810h1v1h-1zM627 821h1v1h-1zM627 832h1v1h-1zM627 843h1v1h-1zM638 540h1v1h-1zM638 551h1v1h-1zM638 561h1v1h-1zM638 572h1v1h-1zM638 583h1v1h-1zM638 594h1v1h-1zM638 605h1v1h-1zM638 616h1v1h-1zM638 626h1v1h-1zM638 637h1v1h-1zM638 648h1v1h-1zM638 659h1v1h-1zM638 670h1v1h-1zM638 680h1v1h-1zM638 691h1v1h-1zM638 702h1v1h-1zM638 713h1v1h-1zM638 724h1v1h-1zM638 735h1v1h-1zM638 745h1v1h-1zM638 756h1v1h-1zM638 767h1v1h-1zM638 778h1v1h-1zM638 789h1v1h-1zM638 800h1v1h-1zM638 810h1v1h-1zM638 821h1v1h-1zM638 832h1v1h-1zM638 843h1v1h-1zM649 540h1v1h-1zM649 551h1v1h-1zM649 561h1v1h-1zM649 572h1v1h-1zM649 583h1v1h-1zM649 594h1v1h-1zM649 605h1v1h-1zM649 616h1v1h-1zM649 626h1v1h-1zM649 637h1v1h-1zM649 648h1v1h-1zM649 659h1v1h-1zM649 670h1v1h-1zM649 680h1v1h-1zM649 691h1v1h-1zM649 702h1v1h-1zM649 713h1v1h-1zM649 724h1v1h-1zM649 735h1v1h-1zM649 745h1v1h-1zM649 756h1v1h-1zM649 767h1v1h-1zM649 778h1v1h-1zM649 789h1v1h-1zM649 800h1v1h-1zM649 810h1v1h-1zM649 821h1v1h-1zM649 832h1v1h-1zM649 843h1v1h-1zM660 540h1v1h-1zM660 551h1v1h-1zM660 561h1v1h-1zM660 572h1v1h-1zM660 583h1v1h-1zM660 594h1v1h-1zM660 605h1v1h-1zM660 616h1v1h-1zM660 626h1v1h-1zM660 637h1v1h-1zM660 648h1v1h-1zM660 659h1v1h-1zM660 670h1v1h-1zM660 680h1v1h-1zM660 691h1v1h-1zM660 702h1v1h-1zM660 713h1v1h-1zM660 724h1v1h-1zM660 735h1v1h-1zM660 745h1v1h-1zM660 756h1v1h-1zM660 767h1v1h-1zM660 778h1v1h-1zM660 789h1v1h-1zM660 800h1v1h-1zM660 810h1v1h-1zM660 821h1v1h-1zM660 832h1v1h-1zM660 843h1v1h-1zM670 540h1v1h-1zM670 551h1v1h-1zM670 561h1v1h-1zM670 572h1v1h-1zM670 583h1v1h-1zM670 594h1v1h-1zM670 605h1v1h-1zM670 616h1v1h-1zM670 626h1v1h-1zM670 637h1v1h-1zM670 648h1v1h-1zM670 659h1v1h-1zM670 670h1v1h-1zM670 680h1v1h-1zM670 691h1v1h-1zM670 702h1v1h-1zM670 713h1v1h-1zM670 724h1v1h-1zM670 735h1v1h-1zM670 745h1v1h-1zM670 756h1v1h-1zM670 767h1v1h-1zM670 778h1v1h-1zM670 789h1v1h-1zM670 800h1v1h-1zM670 810h1v1h-1zM670 821h1v1h-1zM670 832h1v1h-1zM670 843h1v1h-1zM681 540h1v1h-1zM681 551h1v1h-1zM681 561h1v1h-1zM681 572h1v1h-1zM681 583h1v1h-1zM681 594h1v1h-1zM681 605h1v1h-1zM681 616h1v1h-1zM681 626h1v1h-1zM681 637h1v1h-1zM681 648h1v1h-1zM681 659h1v1h-1zM681 670h1v1h-1zM681 680h1v1h-1zM681 691h1v1h-1zM681 702h1v1h-1zM681 713h1v1h-1zM681 724h1v1h-1zM681 735h1v1h-1zM681 745h1v1h-1zM681 756h1v1h-1zM681 767h1v1h-1zM681 778h1v1h-1zM681 789h1v1h-1zM681 800h1v1h-1zM681 810h1v1h-1zM681 821h1v1h-1zM681 832h1v1h-1zM681 843h1v1h-1zM692 540h1v1h-1zM692 551h1v1h-1zM692 561h1v1h-1zM692 572h1v1h-1zM692 583h1v1h-1zM692 594h1v1h-1zM692 605h1v1h-1zM692 616h1v1h-1zM692 626h1v1h-1zM692 637h1v1h-1zM692 648h1v1h-1zM692 659h1v1h-1zM692 670h1v1h-1zM692 680h1v1h-1zM692 691h1v1h-1zM692 702h1v1h-1zM692 713h1v1h-1zM692 724h1v1h-1zM692 735h1v1h-1zM692 745h1v1h-1zM692 756h1v1h-1zM692 767h1v1h-1zM692 778h1v1h-1zM692 789h1v1h-1zM692 800h1v1h-1zM692 810h1v1h-1zM692 821h1v1h-1zM692 832h1v1h-1zM692 843h1v1h-1zM703 540h1v1h-1zM703 551h1v1h-1zM703 561h1v1h-1zM703 572h1v1h-1zM703 583h1v1h-1zM703 594h1v1h-1zM703 605h1v1h-1zM703 616h1v1h-1zM703 626h1v1h-1zM703 637h1v1h-1zM703 648h1v1h-1zM703 659h1v1h-1zM703 670h1v1h-1zM703 680h1v1h-1zM703 691h1v1h-1zM703 702h1v1h-1zM703 713h1v1h-1zM703 724h1v1h-1zM703 735h1v1h-1zM703 745h1v1h-1zM703 756h1v1h-1zM703 767h1v1h-1zM703 778h1v1h-1zM703 789h1v1h-1zM703 800h1v1h-1zM703 810h1v1h-1zM703 821h1v1h-1zM703 832h1v1h-1zM703 843h1v1h-1zM714 540h1v1h-1zM714 551h1v1h-1zM714 561h1v1h-1zM714 572h1v1h-1zM714 583h1v1h-1zM714 594h1v1h-1zM714 605h1v1h-1zM714 616h1v1h-1zM714 626h1v1h-1zM714 637h1v1h-1zM714 648h1v1h-1zM714 659h1v1h-1zM714 670h1v1h-1zM714 680h1v1h-1zM714 691h1v1h-1zM714 702h1v1h-1zM714 713h1v1h-1zM714 724h1v1h-1zM714 735h1v1h-1zM714 745h1v1h-1zM714 756h1v1h-1zM714 767h1v1h-1zM714 778h1v1h-1zM714 789h1v1h-1zM714 800h1v1h-1zM714 810h1v1h-1zM714 821h1v1h-1zM714 832h1v1h-1zM714 843h1v1h-1zM725 540h1v1h-1zM725 551h1v1h-1zM725 561h1v1h-1zM725 572h1v1h-1zM725 583h1v1h-1zM725 594h1v1h-1zM725 605h1v1h-1zM725 616h1v1h-1zM725 626h1v1h-1zM725 637h1v1h-1zM725 648h1v1h-1zM725 659h1v1h-1zM725 670h1v1h-1zM725 680h1v1h-1zM725 691h1v1h-1zM725 702h1v1h-1zM725 713h1v1h-1zM725 724h1v1h-1zM725 735h1v1h-1zM725 745h1v1h-1zM725 756h1v1h-1zM725 767h1v1h-1zM725 778h1v1h-1zM725 789h1v1h-1zM725 800h1v1h-1zM725 810h1v1h-1zM725 821h1v1h-1zM725 832h1v1h-1zM725 843h1v1h-1zM735 540h1v1h-1zM735 551h1v1h-1zM735 561h1v1h-1zM735 572h1v1h-1zM735 583h1v1h-1zM735 594h1v1h-1zM735 605h1v1h-1zM735 616h1v1h-1zM735 626h1v1h-1zM735 637h1v1h-1zM735 648h1v1h-1zM735 659h1v1h-1zM735 670h1v1h-1zM735 680h1v1h-1zM735 691h1v1h-1zM735 702h1v1h-1zM735 713h1v1h-1zM735 724h1v1h-1zM735 735h1v1h-1zM735 745h1v1h-1zM735 756h1v1h-1zM735 767h1v1h-1zM735 778h1v1h-1zM735 789h1v1h-1zM735 800h1v1h-1zM735 810h1v1h-1zM735 821h1v1h-1zM735 832h1v1h-1zM735 843h1v1h-1zM746 540h1v1h-1zM746 551h1v1h-1zM746 561h1v1h-1zM746 572h1v1h-1zM746 583h1v1h-1zM746 594h1v1h-1zM746 605h1v1h-1zM746 616h1v1h-1zM746 626h1v1h-1zM746 637h1v1h-1zM746 648h1v1h-1zM746 659h1v1h-1zM746 670h1v1h-1zM746 680h1v1h-1zM746 691h1v1h-1zM746 702h1v1h-1zM746 713h1v1h-1zM746 724h1v1h-1zM746 735h1v1h-1zM746 745h1v1h-1zM746 756h1v1h-1zM746 767h1v1h-1zM746 778h1v1h-1zM746 789h1v1h-1zM746 800h1v1h-1zM746 810h1v1h-1zM746 821h1v1h-1zM746 832h1v1h-1zM746 843h1v1h-1zM757 540h1v1h-1zM757 551h1v1h-1zM757 561h1v1h-1zM757 572h1v1h-1zM757 583h1v1h-1zM757 594h1v1h-1zM757 605h1v1h-1zM757 616h1v1h-1zM757 626h1v1h-1zM757 637h1v1h-1zM757 648h1v1h-1zM757 659h1v1h-1zM757 670h1v1h-1zM757 680h1v1h-1zM757 691h1v1h-1zM757 702h1v1h-1zM757 713h1v1h-1zM757 724h1v1h-1zM757 735h1v1h-1zM757 745h1v1h-1zM757 756h1v1h-1zM757 767h1v1h-1zM757 778h1v1h-1zM757 789h1v1h-1zM757 800h1v1h-1zM757 810h1v1h-1zM757 821h1v1h-1zM757 832h1v1h-1zM757 843h1v1h-1zM768 540h1v1h-1zM768 551h1v1h-1zM768 561h1v1h-1zM768 572h1v1h-1zM768 583h1v1h-1zM768 594h1v1h-1zM768 605h1v1h-1zM768 616h1v1h-1zM768 626h1v1h-1zM768 637h1v1h-1zM768 648h1v1h-1zM768 659h1v1h-1zM768 670h1v1h-1zM768 680h1v1h-1zM768 691h1v1h-1zM768 702h1v1h-1zM768 713h1v1h-1zM768 724h1v1h-1zM768 735h1v1h-1zM768 745h1v1h-1zM768 756h1v1h-1zM768 767h1v1h-1zM768 778h1v1h-1zM768 789h1v1h-1zM768 800h1v1h-1zM768 810h1v1h-1zM768 821h1v1h-1zM768 832h1v1h-1zM768 843h1v1h-1zM779 540h1v1h-1zM779 551h1v1h-1zM779 561h1v1h-1zM779 572h1v1h-1zM779 583h1v1h-1zM779 594h1v1h-1zM779 605h1v1h-1zM779 616h1v1h-1zM779 626h1v1h-1zM779 637h1v1h-1zM779 648h1v1h-1zM779 659h1v1h-1zM779 670h1v1h-1zM779 680h1v1h-1zM779 691h1v1h-1zM779 702h1v1h-1zM779 713h1v1h-1zM779 724h1v1h-1zM779 735h1v1h-1zM779 745h1v1h-1zM779 756h1v1h-1zM779 767h1v1h-1zM779 778h1v1h-1zM779 789h1v1h-1zM779 800h1v1h-1zM779 810h1v1h-1zM779 821h1v1h-1zM779 832h1v1h-1zM779 843h1v1h-1zM790 540h1v1h-1zM790 551h1v1h-1zM790 561h1v1h-1zM790 572h1v1h-1zM790 583h1v1h-1zM790 594h1v1h-1zM790 605h1v1h-1zM790 616h1v1h-1zM790 626h1v1h-1zM790 637h1v1h-1zM790 648h1v1h-1zM790 659h1v1h-1zM790 670h1v1h-1zM790 680h1v1h-1zM790 691h1v1h-1zM790 702h1v1h-1zM790 713h1v1h-1zM790 724h1v1h-1zM790 735h1v1h-1zM790 745h1v1h-1zM790 756h1v1h-1zM790 767h1v1h-1zM790 778h1v1h-1zM790 789h1v1h-1zM790 800h1v1h-1zM790 810h1v1h-1zM790 821h1v1h-1zM790 832h1v1h-1zM790 843h1v1h-1zM800 540h1v1h-1zM800 551h1v1h-1zM800 561h1v1h-1zM800 572h1v1h-1zM800 583h1v1h-1zM800 594h1v1h-1zM800 605h1v1h-1zM800 616h1v1h-1zM800 626h1v1h-1zM800 637h1v1h-1zM800 648h1v1h-1zM800 659h1v1h-1zM800 670h1v1h-1zM800 680h1v1h-1zM800 691h1v1h-1zM800 702h1v1h-1zM800 713h1v1h-1zM800 724h1v1h-1zM800 735h1v1h-1zM800 745h1v1h-1zM800 756h1v1h-1zM800 767h1v1h-1zM800 778h1v1h-1zM800 789h1v1h-1zM800 800h1v1h-1zM800 810h1v1h-1zM800 821h1v1h-1zM800 832h1v1h-1zM800 843h1v1h-1zM811 540h1v1h-1zM811 551h1v1h-1zM811 561h1v1h-1zM811 572h1v1h-1zM811 583h1v1h-1zM811 594h1v1h-1zM811 605h1v1h-1zM811 616h1v1h-1zM811 626h1v1h-1zM811 637h1v1h-1zM811 648h1v1h-1zM811 659h1v1h-1zM811 670h1v1h-1zM811 680h1v1h-1zM811 691h1v1h-1zM811 702h1v1h-1zM811 713h1v1h-1zM811 724h1v1h-1zM811 735h1v1h-1zM811 745h1v1h-1zM811 756h1v1h-1zM811 767h1v1h-1zM811 778h1v1h-1zM811 789h1v1h-1zM811 800h1v1h-1zM811 810h1v1h-1zM811 821h1v1h-1zM811 832h1v1h-1zM811 843h1v1h-1zM822 540h1v1h-1zM822 551h1v1h-1zM822 561h1v1h-1zM822 572h1v1h-1zM822 583h1v1h-1zM822 594h1v1h-1zM822 605h1v1h-1zM822 616h1v1h-1zM822 626h1v1h-1zM822 637h1v1h-1zM822 648h1v1h-1zM822 659h1v1h-1zM822 670h1v1h-1zM822 680h1v1h-1zM822 691h1v1h-1zM822 702h1v1h-1zM822 713h1v1h-1zM822 724h1v1h-1zM822 735h1v1h-1zM822 745h1v1h-1zM822 756h1v1h-1zM822 767h1v1h-1zM822 778h1v1h-1zM822 789h1v1h-1zM822 800h1v1h-1zM822 810h1v1h-1zM822 821h1v1h-1zM822 832h1v1h-1zM822 843h1v1h-1zM833 540h1v1h-1zM833 551h1v1h-1zM833 561h1v1h-1zM833 572h1v1h-1zM833 583h1v1h-1zM833 594h1v1h-1zM833 605h1v1h-1zM833 616h1v1h-1zM833 626h1v1h-1zM833 637h1v1h-1zM833 648h1v1h-1zM833 659h1v1h-1zM833 670h1v1h-1zM833 680h1v1h-1zM833 691h1v1h-1zM833 702h1v1h-1zM833 713h1v1h-1zM833 724h1v1h-1zM833 735h1v1h-1zM833 745h1v1h-1zM833 756h1v1h-1zM833 767h1v1h-1zM833 778h1v1h-1zM833 789h1v1h-1zM833 800h1v1h-1zM833 810h1v1h-1zM833 821h1v1h-1zM833 832h1v1h-1zM833 843h1v1h-1zM844 540h1v1h-1zM844 551h1v1h-1zM844 561h1v1h-1zM844 572h1v1h-1zM844 583h1v1h-1zM844 594h1v1h-1zM844 605h1v1h-1zM844 616h1v1h-1zM844 626h1v1h-1zM844 637h1v1h-1zM844 648h1v1h-1zM844 659h1v1h-1zM844 670h1v1h-1zM844 680h1v1h-1zM844 691h1v1h-1zM844 702h1v1h-1zM844 713h1v1h-1zM844 724h1v1h-1zM844 735h1v1h-1zM844 745h1v1h-1zM844 756h1v1h-1zM844 767h1v1h-1zM844 778h1v1h-1zM844 789h1v1h-1zM844 800h1v1h-1zM844 810h1v1h-1zM844 821h1v1h-1zM844 832h1v1h-1zM844 843h1v1h-1zM855 540h1v1h-1zM855 551h1v1h-1zM855 561h1v1h-1zM855 572h1v1h-1zM855 583h1v1h-1zM855 594h1v1h-1zM855 605h1v1h-1zM855 616h1v1h-1zM855 626h1v1h-1zM855 637h1v1h-1zM855 648h1v1h-1zM855 659h1v1h-1zM855 670h1v1h-1zM855 680h1v1h-1zM855 691h1v1h-1zM855 702h1v1h-1zM855 713h1v1h-1zM855 724h1v1h-1zM855 735h1v1h-1zM855 745h1v1h-1zM855 756h1v1h-1zM855 767h1v1h-1zM855 778h1v1h-1zM855 789h1v1h-1zM855 800h1v1h-1zM855 810h1v1h-1zM855 821h1v1h-1zM855 832h1v1h-1zM855 843h1v1h-1zM865 540h1v1h-1zM865 551h1v1h-1zM865 561h1v1h-1zM865 572h1v1h-1zM865 583h1v1h-1zM865 594h1v1h-1zM865 605h1v1h-1zM865 616h1v1h-1zM865 626h1v1h-1zM865 637h1v1h-1zM865 648h1v1h-1zM865 659h1v1h-1zM865 670h1v1h-1zM865 680h1v1h-1zM865 691h1v1h-1zM865 702h1v1h-1zM865 713h1v1h-1zM865 724h1v1h-1zM865 735h1v1h-1zM865 745h1v1h-1zM865 756h1v1h-1zM865 767h1v1h-1zM865 778h1v1h-1zM865 789h1v1h-1zM865 800h1v1h-1zM865 810h1v1h-1zM865 821h1v1h-1zM865 832h1v1h-1zM865 843h1v1h-1zM876 540h1v1h-1zM876 551h1v1h-1zM876 561h1v1h-1zM876 572h1v1h-1zM876 583h1v1h-1zM876 594h1v1h-1zM876 605h1v1h-1zM876 616h1v1h-1zM876 626h1v1h-1zM876 637h1v1h-1zM876 648h1v1h-1zM876 659h1v1h-1zM876 670h1v1h-1zM876 680h1v1h-1zM876 691h1v1h-1zM876 702h1v1h-1zM876 713h1v1h-1zM876 724h1v1h-1zM876 735h1v1h-1zM876 745h1v1h-1zM876 756h1v1h-1zM876 767h1v1h-1zM876 778h1v1h-1zM876 789h1v1h-1zM876 800h1v1h-1zM876 810h1v1h-1zM876 821h1v1h-1zM876 832h1v1h-1zM876 843h1v1h-1zM887 540h1v1h-1zM887 551h1v1h-1zM887 561h1v1h-1zM887 572h1v1h-1zM887 583h1v1h-1zM887 594h1v1h-1zM887 605h1v1h-1zM887 616h1v1h-1zM887 626h1v1h-1zM887 637h1v1h-1zM887 648h1v1h-1zM887 659h1v1h-1zM887 670h1v1h-1zM887 680h1v1h-1zM887 691h1v1h-1zM887 702h1v1h-1zM887 713h1v1h-1zM887 724h1v1h-1zM887 735h1v1h-1zM887 745h1v1h-1zM887 756h1v1h-1zM887 767h1v1h-1zM887 778h1v1h-1zM887 789h1v1h-1zM887 800h1v1h-1zM887 810h1v1h-1zM887 821h1v1h-1zM887 832h1v1h-1zM887 843h1v1h-1zM898 540h1v1h-1zM898 551h1v1h-1zM898 561h1v1h-1zM898 572h1v1h-1zM898 583h1v1h-1zM898 594h1v1h-1zM898 605h1v1h-1zM898 616h1v1h-1zM898 626h1v1h-1zM898 637h1v1h-1zM898 648h1v1h-1zM898 659h1v1h-1zM898 670h1v1h-1zM898 680h1v1h-1zM898 691h1v1h-1zM898 702h1v1h-1zM898 713h1v1h-1zM898 724h1v1h-1zM898 735h1v1h-1zM898 745h1v1h-1zM898 756h1v1h-1zM898 767h1v1h-1zM898 778h1v1h-1zM898 789h1v1h-1zM898 800h1v1h-1zM898 810h1v1h-1zM898 821h1v1h-1zM898 832h1v1h-1zM898 843h1v1h-1zM909 540h1v1h-1zM909 551h1v1h-1zM909 561h1v1h-1zM909 572h1v1h-1zM909 583h1v1h-1zM909 594h1v1h-1zM909 605h1v1h-1zM909 616h1v1h-1zM909 626h1v1h-1zM909 637h1v1h-1zM909 648h1v1h-1zM909 659h1v1h-1zM909 670h1v1h-1zM909 680h1v1h-1zM909 691h1v1h-1zM909 702h1v1h-1zM909 713h1v1h-1zM909 724h1v1h-1zM909 735h1v1h-1zM909 745h1v1h-1zM909 756h1v1h-1zM909 767h1v1h-1zM909 778h1v1h-1zM909 789h1v1h-1zM909 800h1v1h-1zM909 810h1v1h-1zM909 821h1v1h-1zM909 832h1v1h-1zM909 843h1v1h-1zM920 540h1v1h-1zM920 551h1v1h-1zM920 561h1v1h-1zM920 572h1v1h-1zM920 583h1v1h-1zM920 594h1v1h-1zM920 605h1v1h-1zM920 616h1v1h-1zM920 626h1v1h-1zM920 637h1v1h-1zM920 648h1v1h-1zM920 659h1v1h-1zM920 670h1v1h-1zM920 680h1v1h-1zM920 691h1v1h-1zM920 702h1v1h-1zM920 713h1v1h-1zM920 724h1v1h-1zM920 735h1v1h-1zM920 745h1v1h-1zM920 756h1v1h-1zM920 767h1v1h-1zM920 778h1v1h-1zM920 789h1v1h-1zM920 800h1v1h-1zM920 810h1v1h-1zM920 821h1v1h-1zM920 832h1v1h-1zM920 843h1v1h-1zM930 540h1v1h-1zM930 551h1v1h-1zM930 561h1v1h-1zM930 572h1v1h-1zM930 583h1v1h-1zM930 594h1v1h-1zM930 605h1v1h-1zM930 616h1v1h-1zM930 626h1v1h-1zM930 637h1v1h-1zM930 648h1v1h-1zM930 659h1v1h-1zM930 670h1v1h-1zM930 680h1v1h-1zM930 691h1v1h-1zM930 702h1v1h-1zM930 713h1v1h-1zM930 724h1v1h-1zM930 735h1v1h-1zM930 745h1v1h-1zM930 756h1v1h-1zM930 767h1v1h-1zM930 778h1v1h-1zM930 789h1v1h-1zM930 800h1v1h-1zM930 810h1v1h-1zM930 821h1v1h-1zM930 832h1v1h-1zM930 843h1v1h-1zM941 540h1v1h-1zM941 551h1v1h-1zM941 561h1v1h-1zM941 572h1v1h-1zM941 583h1v1h-1zM941 594h1v1h-1zM941 605h1v1h-1zM941 616h1v1h-1zM941 626h1v1h-1zM941 637h1v1h-1zM941 648h1v1h-1zM941 659h1v1h-1zM941 670h1v1h-1zM941 680h1v1h-1zM941 691h1v1h-1zM941 702h1v1h-1zM941 713h1v1h-1zM941 724h1v1h-1zM941 735h1v1h-1zM941 745h1v1h-1zM941 756h1v1h-1zM941 767h1v1h-1zM941 778h1v1h-1zM941 789h1v1h-1zM941 800h1v1h-1zM941 810h1v1h-1zM941 821h1v1h-1zM941 832h1v1h-1zM941 843h1v1h-1zM952 540h1v1h-1zM952 551h1v1h-1zM952 561h1v1h-1zM952 572h1v1h-1zM952 583h1v1h-1zM952 594h1v1h-1zM952 605h1v1h-1zM952 616h1v1h-1zM952 626h1v1h-1zM952 637h1v1h-1zM952 648h1v1h-1zM952 659h1v1h-1zM952 670h1v1h-1zM952 680h1v1h-1zM952 691h1v1h-1zM952 702h1v1h-1zM952 713h1v1h-1zM952 724h1v1h-1zM952 735h1v1h-1zM952 745h1v1h-1zM952 756h1v1h-1zM952 767h1v1h-1zM952 778h1v1h-1zM952 789h1v1h-1zM952 800h1v1h-1zM952 810h1v1h-1zM952 821h1v1h-1zM952 832h1v1h-1zM952 843h1v1h-1zM963 540h1v1h-1zM963 551h1v1h-1zM963 561h1v1h-1zM963 572h1v1h-1zM963 583h1v1h-1zM963 594h1v1h-1zM963 605h1v1h-1zM963 616h1v1h-1zM963 626h1v1h-1zM963 637h1v1h-1zM963 648h1v1h-1zM963 659h1v1h-1zM963 670h1v1h-1zM963 680h1v1h-1zM963 691h1v1h-1zM963 702h1v1h-1zM963 713h1v1h-1zM963 724h1v1h-1zM963 735h1v1h-1zM963 745h1v1h-1zM963 756h1v1h-1zM963 767h1v1h-1zM963 778h1v1h-1zM963 789h1v1h-1zM963 800h1v1h-1zM963 810h1v1h-1zM963 821h1v1h-1zM963 832h1v1h-1zM963 843h1v1h-1zM974 540h1v1h-1zM974 551h1v1h-1zM974 561h1v1h-1zM974 572h1v1h-1zM974 583h1v1h-1zM974 594h1v1h-1zM974 605h1v1h-1zM974 616h1v1h-1zM974 626h1v1h-1zM974 637h1v1h-1zM974 648h1v1h-1zM974 659h1v1h-1zM974 670h1v1h-1zM974 680h1v1h-1zM974 691h1v1h-1zM974 702h1v1h-1zM974 713h1v1h-1zM974 724h1v1h-1zM974 735h1v1h-1zM974 745h1v1h-1zM974 756h1v1h-1zM974 767h1v1h-1zM974 778h1v1h-1zM974 789h1v1h-1zM974 800h1v1h-1zM974 810h1v1h-1zM974 821h1v1h-1zM974 832h1v1h-1zM974 843h1v1h-1zM985 540h1v1h-1zM985 551h1v1h-1zM985 561h1v1h-1zM985 572h1v1h-1zM985 583h1v1h-1zM985 594h1v1h-1zM985 605h1v1h-1zM985 616h1v1h-1zM985 626h1v1h-1zM985 637h1v1h-1zM985 648h1v1h-1zM985 659h1v1h-1zM985 670h1v1h-1zM985 680h1v1h-1zM985 691h1v1h-1zM985 702h1v1h-1zM985 713h1v1h-1zM985 724h1v1h-1zM985 735h1v1h-1zM985 745h1v1h-1zM985 756h1v1h-1zM985 767h1v1h-1zM985 778h1v1h-1zM985 789h1v1h-1zM985 800h1v1h-1zM985 810h1v1h-1zM985 821h1v1h-1zM985 832h1v1h-1zM985 843h1v1h-1zM995 540h1v1h-1zM995 551h1v1h-1zM995 561h1v1h-1zM995 572h1v1h-1zM995 583h1v1h-1zM995 594h1v1h-1zM995 605h1v1h-1zM995 616h1v1h-1zM995 626h1v1h-1zM995 637h1v1h-1zM995 648h1v1h-1zM995 659h1v1h-1zM995 670h1v1h-1zM995 680h1v1h-1zM995 691h1v1h-1zM995 702h1v1h-1zM995 713h1v1h-1zM995 724h1v1h-1zM995 735h1v1h-1zM995 745h1v1h-1zM995 756h1v1h-1zM995 767h1v1h-1zM995 778h1v1h-1zM995 789h1v1h-1zM995 800h1v1h-1zM995 810h1v1h-1zM995 821h1v1h-1zM995 832h1v1h-1zM995 843h1v1h-1zM1006 540h1v1h-1zM1006 551h1v1h-1zM1006 561h1v1h-1zM1006 572h1v1h-1zM1006 583h1v1h-1zM1006 594h1v1h-1zM1006 605h1v1h-1zM1006 616h1v1h-1zM1006 626h1v1h-1zM1006 637h1v1h-1zM1006 648h1v1h-1zM1006 659h1v1h-1zM1006 670h1v1h-1zM1006 680h1v1h-1zM1006 691h1v1h-1zM1006 702h1v1h-1zM1006 713h1v1h-1zM1006 724h1v1h-1zM1006 735h1v1h-1zM1006 745h1v1h-1zM1006 756h1v1h-1zM1006 767h1v1h-1zM1006 778h1v1h-1zM1006 789h1v1h-1zM1006 800h1v1h-1zM1006 810h1v1h-1zM1006 821h1v1h-1zM1006 832h1v1h-1zM1006 843h1v1h-1zM1017 540h1v1h-1zM1017 551h1v1h-1zM1017 561h1v1h-1zM1017 572h1v1h-1zM1017 583h1v1h-1zM1017 594h1v1h-1zM1017 605h1v1h-1zM1017 616h1v1h-1zM1017 626h1v1h-1zM1017 637h1v1h-1zM1017 648h1v1h-1zM1017 659h1v1h-1zM1017 670h1v1h-1zM1017 680h1v1h-1zM1017 691h1v1h-1zM1017 702h1v1h-1zM1017 713h1v1h-1zM1017 724h1v1h-1zM1017 735h1v1h-1zM1017 745h1v1h-1zM1017 756h1v1h-1zM1017 767h1v1h-1zM1017 778h1v1h-1zM1017 789h1v1h-1zM1017 800h1v1h-1zM1017 810h1v1h-1zM1017 821h1v1h-1zM1017 832h1v1h-1zM1017 843h1v1h-1zM1028 540h1v1h-1zM1028 551h1v1h-1zM1028 561h1v1h-1zM1028 572h1v1h-1zM1028 583h1v1h-1zM1028 594h1v1h-1zM1028 605h1v1h-1zM1028 616h1v1h-1zM1028 626h1v1h-1zM1028 637h1v1h-1zM1028 648h1v1h-1zM1028 659h1v1h-1zM1028 670h1v1h-1zM1028 680h1v1h-1zM1028 691h1v1h-1zM1028 702h1v1h-1zM1028 713h1v1h-1zM1028 724h1v1h-1zM1028 735h1v1h-1zM1028 745h1v1h-1zM1028 756h1v1h-1zM1028 767h1v1h-1zM1028 778h1v1h-1zM1028 789h1v1h-1zM1028 800h1v1h-1zM1028 810h1v1h-1zM1028 821h1v1h-1zM1028 832h1v1h-1zM1028 843h1v1h-1zM1039 540h1v1h-1zM1039 551h1v1h-1zM1039 561h1v1h-1zM1039 572h1v1h-1zM1039 583h1v1h-1zM1039 594h1v1h-1zM1039 605h1v1h-1zM1039 616h1v1h-1zM1039 626h1v1h-1zM1039 637h1v1h-1zM1039 648h1v1h-1zM1039 659h1v1h-1zM1039 670h1v1h-1zM1039 680h1v1h-1zM1039 691h1v1h-1zM1039 702h1v1h-1zM1039 713h1v1h-1zM1039 724h1v1h-1zM1039 735h1v1h-1zM1039 745h1v1h-1zM1039 756h1v1h-1zM1039 767h1v1h-1zM1039 778h1v1h-1zM1039 789h1v1h-1zM1039 800h1v1h-1zM1039 810h1v1h-1zM1039 821h1v1h-1zM1039 832h1v1h-1zM1039 843h1v1h-1zM1050 540h1v1h-1zM1050 551h1v1h-1zM1050 561h1v1h-1zM1050 572h1v1h-1zM1050 583h1v1h-1zM1050 594h1v1h-1zM1050 605h1v1h-1zM1050 616h1v1h-1zM1050 626h1v1h-1zM1050 637h1v1h-1zM1050 648h1v1h-1zM1050 659h1v1h-1zM1050 670h1v1h-1zM1050 680h1v1h-1zM1050 691h1v1h-1zM1050 702h1v1h-1zM1050 713h1v1h-1zM1050 724h1v1h-1zM1050 735h1v1h-1zM1050 745h1v1h-1zM1050 756h1v1h-1zM1050 767h1v1h-1zM1050 778h1v1h-1zM1050 789h1v1h-1zM1050 800h1v1h-1zM1050 810h1v1h-1zM1050 821h1v1h-1zM1050 832h1v1h-1zM1050 843h1v1h-1zM1060 540h1v1h-1zM1060 551h1v1h-1zM1060 561h1v1h-1zM1060 572h1v1h-1zM1060 583h1v1h-1zM1060 594h1v1h-1zM1060 605h1v1h-1zM1060 616h1v1h-1zM1060 626h1v1h-1zM1060 637h1v1h-1zM1060 648h1v1h-1zM1060 659h1v1h-1zM1060 670h1v1h-1zM1060 680h1v1h-1zM1060 691h1v1h-1zM1060 702h1v1h-1zM1060 713h1v1h-1zM1060 724h1v1h-1zM1060 735h1v1h-1zM1060 745h1v1h-1zM1060 756h1v1h-1zM1060 767h1v1h-1zM1060 778h1v1h-1zM1060 789h1v1h-1zM1060 800h1v1h-1zM1060 810h1v1h-1zM1060 821h1v1h-1zM1060 832h1v1h-1zM1060 843h1v1h-1zM1071 540h1v1h-1zM1071 551h1v1h-1zM1071 561h1v1h-1zM1071 572h1v1h-1zM1071 583h1v1h-1zM1071 594h1v1h-1zM1071 605h1v1h-1zM1071 616h1v1h-1zM1071 626h1v1h-1zM1071 637h1v1h-1zM1071 648h1v1h-1zM1071 659h1v1h-1zM1071 670h1v1h-1zM1071 680h1v1h-1zM1071 691h1v1h-1zM1071 702h1v1h-1zM1071 713h1v1h-1zM1071 724h1v1h-1zM1071 735h1v1h-1zM1071 745h1v1h-1zM1071 756h1v1h-1zM1071 767h1v1h-1zM1071 778h1v1h-1zM1071 789h1v1h-1zM1071 800h1v1h-1zM1071 810h1v1h-1zM1071 821h1v1h-1zM1071 832h1v1h-1zM1071 843h1v1h-1zM1082 540h1v1h-1zM1082 551h1v1h-1zM1082 561h1v1h-1zM1082 572h1v1h-1zM1082 583h1v1h-1zM1082 594h1v1h-1zM1082 605h1v1h-1zM1082 616h1v1h-1zM1082 626h1v1h-1zM1082 637h1v1h-1zM1082 648h1v1h-1zM1082 659h1v1h-1zM1082 670h1v1h-1zM1082 680h1v1h-1zM1082 691h1v1h-1zM1082 702h1v1h-1zM1082 713h1v1h-1zM1082 724h1v1h-1zM1082 735h1v1h-1zM1082 745h1v1h-1zM1082 756h1v1h-1zM1082 767h1v1h-1zM1082 778h1v1h-1zM1082 789h1v1h-1zM1082 800h1v1h-1zM1082 810h1v1h-1zM1082 821h1v1h-1zM1082 832h1v1h-1zM1082 843h1v1h-1zM1093 540h1v1h-1zM1093 551h1v1h-1zM1093 561h1v1h-1zM1093 572h1v1h-1zM1093 583h1v1h-1zM1093 594h1v1h-1zM1093 605h1v1h-1zM1093 616h1v1h-1zM1093 626h1v1h-1zM1093 637h1v1h-1zM1093 648h1v1h-1zM1093 659h1v1h-1zM1093 670h1v1h-1zM1093 680h1v1h-1zM1093 691h1v1h-1zM1093 702h1v1h-1zM1093 713h1v1h-1zM1093 724h1v1h-1zM1093 735h1v1h-1zM1093 745h1v1h-1zM1093 756h1v1h-1zM1093 767h1v1h-1zM1093 778h1v1h-1zM1093 789h1v1h-1zM1093 800h1v1h-1zM1093 810h1v1h-1zM1093 821h1v1h-1zM1093 832h1v1h-1zM1093 843h1v1h-1zM1104 540h1v1h-1zM1104 551h1v1h-1zM1104 561h1v1h-1zM1104 572h1v1h-1zM1104 583h1v1h-1zM1104 594h1v1h-1zM1104 605h1v1h-1zM1104 616h1v1h-1zM1104 626h1v1h-1zM1104 637h1v1h-1zM1104 648h1v1h-1zM1104 659h1v1h-1zM1104 670h1v1h-1zM1104 680h1v1h-1zM1104 691h1v1h-1zM1104 702h1v1h-1zM1104 713h1v1h-1zM1104 724h1v1h-1zM1104 735h1v1h-1zM1104 745h1v1h-1zM1104 756h1v1h-1zM1104 767h1v1h-1zM1104 778h1v1h-1zM1104 789h1v1h-1zM1104 800h1v1h-1zM1104 810h1v1h-1zM1104 821h1v1h-1zM1104 832h1v1h-1zM1104 843h1v1h-1zM1115 540h1v1h-1zM1115 551h1v1h-1zM1115 561h1v1h-1zM1115 572h1v1h-1zM1115 583h1v1h-1zM1115 594h1v1h-1zM1115 605h1v1h-1zM1115 616h1v1h-1zM1115 626h1v1h-1zM1115 637h1v1h-1zM1115 648h1v1h-1zM1115 659h1v1h-1zM1115 670h1v1h-1zM1115 680h1v1h-1zM1115 691h1v1h-1zM1115 702h1v1h-1zM1115 713h1v1h-1zM1115 724h1v1h-1zM1115 735h1v1h-1zM1115 745h1v1h-1zM1115 756h1v1h-1zM1115 767h1v1h-1zM1115 778h1v1h-1zM1115 789h1v1h-1zM1115 800h1v1h-1zM1115 810h1v1h-1zM1115 821h1v1h-1zM1115 832h1v1h-1zM1115 843h1v1h-1zM1125 540h1v1h-1zM1125 551h1v1h-1zM1125 561h1v1h-1zM1125 572h1v1h-1zM1125 583h1v1h-1zM1125 594h1v1h-1zM1125 605h1v1h-1zM1125 616h1v1h-1zM1125 626h1v1h-1zM1125 637h1v1h-1zM1125 648h1v1h-1zM1125 659h1v1h-1zM1125 670h1v1h-1zM1125 680h1v1h-1zM1125 691h1v1h-1zM1125 702h1v1h-1zM1125 713h1v1h-1zM1125 724h1v1h-1zM1125 735h1v1h-1zM1125 745h1v1h-1zM1125 756h1v1h-1zM1125 767h1v1h-1zM1125 778h1v1h-1zM1125 789h1v1h-1zM1125 800h1v1h-1zM1125 810h1v1h-1zM1125 821h1v1h-1zM1125 832h1v1h-1zM1125 843h1v1h-1zM1136 540h1v1h-1zM1136 551h1v1h-1zM1136 561h1v1h-1zM1136 572h1v1h-1zM1136 583h1v1h-1zM1136 594h1v1h-1zM1136 605h1v1h-1zM1136 616h1v1h-1zM1136 626h1v1h-1zM1136 637h1v1h-1zM1136 648h1v1h-1zM1136 659h1v1h-1zM1136 670h1v1h-1zM1136 680h1v1h-1zM1136 691h1v1h-1zM1136 702h1v1h-1zM1136 713h1v1h-1zM1136 724h1v1h-1zM1136 735h1v1h-1zM1136 745h1v1h-1zM1136 756h1v1h-1zM1136 767h1v1h-1zM1136 778h1v1h-1zM1136 789h1v1h-1zM1136 800h1v1h-1zM1136 810h1v1h-1zM1136 821h1v1h-1zM1136 832h1v1h-1zM1136 843h1v1h-1zM1147 540h1v1h-1zM1147 551h1v1h-1zM1147 561h1v1h-1zM1147 572h1v1h-1zM1147 583h1v1h-1zM1147 594h1v1h-1zM1147 605h1v1h-1zM1147 616h1v1h-1zM1147 626h1v1h-1zM1147 637h1v1h-1zM1147 648h1v1h-1zM1147 659h1v1h-1zM1147 670h1v1h-1zM1147 680h1v1h-1zM1147 691h1v1h-1zM1147 702h1v1h-1zM1147 713h1v1h-1zM1147 724h1v1h-1zM1147 735h1v1h-1zM1147 745h1v1h-1zM1147 756h1v1h-1zM1147 767h1v1h-1zM1147 778h1v1h-1zM1147 789h1v1h-1zM1147 800h1v1h-1zM1147 810h1v1h-1zM1147 821h1v1h-1zM1147 832h1v1h-1zM1147 843h1v1h-1zM1158 540h1v1h-1zM1158 551h1v1h-1zM1158 561h1v1h-1zM1158 572h1v1h-1zM1158 583h1v1h-1zM1158 594h1v1h-1zM1158 605h1v1h-1zM1158 616h1v1h-1zM1158 626h1v1h-1zM1158 637h1v1h-1zM1158 648h1v1h-1zM1158 659h1v1h-1zM1158 670h1v1h-1zM1158 680h1v1h-1zM1158 691h1v1h-1zM1158 702h1v1h-1zM1158 713h1v1h-1zM1158 724h1v1h-1zM1158 735h1v1h-1zM1158 745h1v1h-1zM1158 756h1v1h-1zM1158 767h1v1h-1zM1158 778h1v1h-1zM1158 789h1v1h-1zM1158 800h1v1h-1zM1158 810h1v1h-1zM1158 821h1v1h-1zM1158 832h1v1h-1zM1158 843h1v1h-1zM1169 540h1v1h-1zM1169 551h1v1h-1zM1169 561h1v1h-1zM1169 572h1v1h-1zM1169 583h1v1h-1zM1169 594h1v1h-1zM1169 605h1v1h-1zM1169 616h1v1h-1zM1169 626h1v1h-1zM1169 637h1v1h-1zM1169 648h1v1h-1zM1169 659h1v1h-1zM1169 670h1v1h-1zM1169 680h1v1h-1zM1169 691h1v1h-1zM1169 702h1v1h-1zM1169 713h1v1h-1zM1169 724h1v1h-1zM1169 735h1v1h-1zM1169 745h1v1h-1zM1169 756h1v1h-1zM1169 767h1v1h-1zM1169 778h1v1h-1zM1169 789h1v1h-1zM1169 800h1v1h-1zM1169 810h1v1h-1zM1169 821h1v1h-1zM1169 832h1v1h-1zM1169 843h1v1h-1zM1180 540h1v1h-1zM1180 551h1v1h-1zM1180 561h1v1h-1zM1180 572h1v1h-1zM1180 583h1v1h-1zM1180 594h1v1h-1zM1180 605h1v1h-1zM1180 616h1v1h-1zM1180 626h1v1h-1zM1180 637h1v1h-1zM1180 648h1v1h-1zM1180 659h1v1h-1zM1180 670h1v1h-1zM1180 680h1v1h-1zM1180 691h1v1h-1zM1180 702h1v1h-1zM1180 713h1v1h-1zM1180 724h1v1h-1zM1180 735h1v1h-1zM1180 745h1v1h-1zM1180 756h1v1h-1zM1180 767h1v1h-1zM1180 778h1v1h-1zM1180 789h1v1h-1zM1180 800h1v1h-1zM1180 810h1v1h-1zM1180 821h1v1h-1zM1180 832h1v1h-1zM1180 843h1v1h-1zM1190 540h1v1h-1zM1190 551h1v1h-1zM1190 561h1v1h-1zM1190 572h1v1h-1zM1190 583h1v1h-1zM1190 594h1v1h-1zM1190 605h1v1h-1zM1190 616h1v1h-1zM1190 626h1v1h-1zM1190 637h1v1h-1zM1190 648h1v1h-1zM1190 659h1v1h-1zM1190 670h1v1h-1zM1190 680h1v1h-1zM1190 691h1v1h-1zM1190 702h1v1h-1zM1190 713h1v1h-1zM1190 724h1v1h-1zM1190 735h1v1h-1zM1190 745h1v1h-1zM1190 756h1v1h-1zM1190 767h1v1h-1zM1190 778h1v1h-1zM1190 789h1v1h-1zM1190 800h1v1h-1zM1190 810h1v1h-1zM1190 821h1v1h-1zM1190 832h1v1h-1zM1190 843h1v1h-1zM1201 540h1v1h-1zM1201 551h1v1h-1zM1201 561h1v1h-1zM1201 572h1v1h-1zM1201 583h1v1h-1zM1201 594h1v1h-1zM1201 605h1v1h-1zM1201 616h1v1h-1zM1201 626h1v1h-1zM1201 637h1v1h-1zM1201 648h1v1h-1zM1201 659h1v1h-1zM1201 670h1v1h-1zM1201 680h1v1h-1zM1201 691h1v1h-1zM1201 702h1v1h-1zM1201 713h1v1h-1zM1201 724h1v1h-1zM1201 735h1v1h-1zM1201 745h1v1h-1zM1201 756h1v1h-1zM1201 767h1v1h-1zM1201 778h1v1h-1zM1201 789h1v1h-1zM1201 800h1v1h-1zM1201 810h1v1h-1zM1201 821h1v1h-1zM1201 832h1v1h-1zM1201 843h1v1h-1zM1212 540h1v1h-1zM1212 551h1v1h-1zM1212 561h1v1h-1zM1212 572h1v1h-1zM1212 583h1v1h-1zM1212 594h1v1h-1zM1212 605h1v1h-1zM1212 616h1v1h-1zM1212 626h1v1h-1zM1212 637h1v1h-1zM1212 648h1v1h-1zM1212 659h1v1h-1zM1212 670h1v1h-1zM1212 680h1v1h-1zM1212 691h1v1h-1zM1212 702h1v1h-1zM1212 713h1v1h-1zM1212 724h1v1h-1zM1212 735h1v1h-1zM1212 745h1v1h-1zM1212 756h1v1h-1zM1212 767h1v1h-1zM1212 778h1v1h-1zM1212 789h1v1h-1zM1212 800h1v1h-1zM1212 810h1v1h-1zM1212 821h1v1h-1zM1212 832h1v1h-1zM1212 843h1v1h-1zM1223 540h1v1h-1zM1223 551h1v1h-1zM1223 561h1v1h-1zM1223 572h1v1h-1zM1223 583h1v1h-1zM1223 594h1v1h-1zM1223 605h1v1h-1zM1223 616h1v1h-1zM1223 626h1v1h-1zM1223 637h1v1h-1zM1223 648h1v1h-1zM1223 659h1v1h-1zM1223 670h1v1h-1zM1223 680h1v1h-1zM1223 691h1v1h-1zM1223 702h1v1h-1zM1223 713h1v1h-1zM1223 724h1v1h-1zM1223 735h1v1h-1zM1223 745h1v1h-1zM1223 756h1v1h-1zM1223 767h1v1h-1zM1223 778h1v1h-1zM1223 789h1v1h-1zM1223 800h1v1h-1zM1223 810h1v1h-1zM1223 821h1v1h-1zM1223 832h1v1h-1zM1223 843h1v1h-1zM1234 540h1v1h-1zM1234 551h1v1h-1zM1234 561h1v1h-1zM1234 572h1v1h-1zM1234 583h1v1h-1zM1234 594h1v1h-1zM1234 605h1v1h-1zM1234 616h1v1h-1zM1234 626h1v1h-1zM1234 637h1v1h-1zM1234 648h1v1h-1zM1234 659h1v1h-1zM1234 670h1v1h-1zM1234 680h1v1h-1zM1234 691h1v1h-1zM1234 702h1v1h-1zM1234 713h1v1h-1zM1234 724h1v1h-1zM1234 735h1v1h-1zM1234 745h1v1h-1zM1234 756h1v1h-1zM1234 767h1v1h-1zM1234 778h1v1h-1zM1234 789h1v1h-1zM1234 800h1v1h-1zM1234 810h1v1h-1zM1234 821h1v1h-1zM1234 832h1v1h-1zM1234 843h1v1h-1zM1244 540h1v1h-1zM1244 551h1v1h-1zM1244 561h1v1h-1zM1244 572h1v1h-1zM1244 583h1v1h-1zM1244 594h1v1h-1zM1244 605h1v1h-1zM1244 616h1v1h-1zM1244 626h1v1h-1zM1244 637h1v1h-1zM1244 648h1v1h-1zM1244 659h1v1h-1zM1244 670h1v1h-1zM1244 680h1v1h-1zM1244 691h1v1h-1zM1244 702h1v1h-1zM1244 713h1v1h-1zM1244 724h1v1h-1zM1244 735h1v1h-1zM1244 745h1v1h-1zM1244 756h1v1h-1zM1244 767h1v1h-1zM1244 778h1v1h-1zM1244 789h1v1h-1zM1244 800h1v1h-1zM1244 810h1v1h-1zM1244 821h1v1h-1zM1244 832h1v1h-1zM1244 843h1v1h-1zM1255 540h1v1h-1zM1255 551h1v1h-1zM1255 561h1v1h-1zM1255 572h1v1h-1zM1255 583h1v1h-1zM1255 594h1v1h-1zM1255 605h1v1h-1zM1255 616h1v1h-1zM1255 626h1v1h-1zM1255 637h1v1h-1zM1255 648h1v1h-1zM1255 659h1v1h-1zM1255 670h1v1h-1zM1255 680h1v1h-1zM1255 691h1v1h-1zM1255 702h1v1h-1zM1255 713h1v1h-1zM1255 724h1v1h-1zM1255 735h1v1h-1zM1255 745h1v1h-1zM1255 756h1v1h-1zM1255 767h1v1h-1zM1255 778h1v1h-1zM1255 789h1v1h-1zM1255 800h1v1h-1zM1255 810h1v1h-1zM1255 821h1v1h-1zM1255 832h1v1h-1zM1255 843h1v1h-1zM1266 540h1v1h-1zM1266 551h1v1h-1zM1266 561h1v1h-1zM1266 572h1v1h-1zM1266 583h1v1h-1zM1266 594h1v1h-1zM1266 605h1v1h-1zM1266 616h1v1h-1zM1266 626h1v1h-1zM1266 637h1v1h-1zM1266 648h1v1h-1zM1266 659h1v1h-1zM1266 670h1v1h-1zM1266 680h1v1h-1zM1266 691h1v1h-1zM1266 702h1v1h-1zM1266 713h1v1h-1zM1266 724h1v1h-1zM1266 735h1v1h-1zM1266 745h1v1h-1zM1266 756h1v1h-1zM1266 767h1v1h-1zM1266 778h1v1h-1zM1266 789h1v1h-1zM1266 800h1v1h-1zM1266 810h1v1h-1zM1266 821h1v1h-1zM1266 832h1v1h-1zM1266 843h1v1h-1zM1277 540h1v1h-1zM1277 551h1v1h-1zM1277 561h1v1h-1zM1277 572h1v1h-1zM1277 583h1v1h-1zM1277 594h1v1h-1zM1277 605h1v1h-1zM1277 616h1v1h-1zM1277 626h1v1h-1zM1277 637h1v1h-1zM1277 648h1v1h-1zM1277 659h1v1h-1zM1277 670h1v1h-1zM1277 680h1v1h-1zM1277 691h1v1h-1zM1277 702h1v1h-1zM1277 713h1v1h-1zM1277 724h1v1h-1zM1277 735h1v1h-1zM1277 745h1v1h-1zM1277 756h1v1h-1zM1277 767h1v1h-1zM1277 778h1v1h-1zM1277 789h1v1h-1zM1277 800h1v1h-1zM1277 810h1v1h-1zM1277 821h1v1h-1zM1277 832h1v1h-1zM1277 843h1v1h-1zM1288 540h1v1h-1zM1288 551h1v1h-1zM1288 561h1v1h-1zM1288 572h1v1h-1zM1288 583h1v1h-1zM1288 594h1v1h-1zM1288 605h1v1h-1zM1288 616h1v1h-1zM1288 626h1v1h-1zM1288 637h1v1h-1zM1288 648h1v1h-1zM1288 659h1v1h-1zM1288 670h1v1h-1zM1288 680h1v1h-1zM1288 691h1v1h-1zM1288 702h1v1h-1zM1288 713h1v1h-1zM1288 724h1v1h-1zM1288 735h1v1h-1zM1288 745h1v1h-1zM1288 756h1v1h-1zM1288 767h1v1h-1zM1288 778h1v1h-1zM1288 789h1v1h-1zM1288 800h1v1h-1zM1288 810h1v1h-1zM1288 821h1v1h-1zM1288 832h1v1h-1zM1288 843h1v1h-1zM1299 540h1v1h-1zM1299 551h1v1h-1zM1299 561h1v1h-1zM1299 572h1v1h-1zM1299 583h1v1h-1zM1299 594h1v1h-1zM1299 605h1v1h-1zM1299 616h1v1h-1zM1299 626h1v1h-1zM1299 637h1v1h-1zM1299 648h1v1h-1zM1299 659h1v1h-1zM1299 670h1v1h-1zM1299 680h1v1h-1zM1299 691h1v1h-1zM1299 702h1v1h-1zM1299 713h1v1h-1zM1299 724h1v1h-1zM1299 735h1v1h-1zM1299 745h1v1h-1zM1299 756h1v1h-1zM1299 767h1v1h-1zM1299 778h1v1h-1zM1299 789h1v1h-1zM1299 800h1v1h-1zM1299 810h1v1h-1zM1299 821h1v1h-1zM1299 832h1v1h-1zM1299 843h1v1h-1zM1309 540h1v1h-1zM1309 551h1v1h-1zM1309 561h1v1h-1zM1309 572h1v1h-1zM1309 583h1v1h-1zM1309 594h1v1h-1zM1309 605h1v1h-1zM1309 616h1v1h-1zM1309 626h1v1h-1zM1309 637h1v1h-1zM1309 648h1v1h-1zM1309 659h1v1h-1zM1309 670h1v1h-1zM1309 680h1v1h-1zM1309 691h1v1h-1zM1309 702h1v1h-1zM1309 713h1v1h-1zM1309 724h1v1h-1zM1309 735h1v1h-1zM1309 745h1v1h-1zM1309 756h1v1h-1zM1309 767h1v1h-1zM1309 778h1v1h-1zM1309 789h1v1h-1zM1309 800h1v1h-1zM1309 810h1v1h-1zM1309 821h1v1h-1zM1309 832h1v1h-1zM1309 843h1v1h-1zM1320 540h1v1h-1zM1320 551h1v1h-1zM1320 561h1v1h-1zM1320 572h1v1h-1zM1320 583h1v1h-1zM1320 594h1v1h-1zM1320 605h1v1h-1zM1320 616h1v1h-1zM1320 626h1v1h-1zM1320 637h1v1h-1zM1320 648h1v1h-1zM1320 659h1v1h-1zM1320 670h1v1h-1zM1320 680h1v1h-1zM1320 691h1v1h-1zM1320 702h1v1h-1zM1320 713h1v1h-1zM1320 724h1v1h-1zM1320 735h1v1h-1zM1320 745h1v1h-1zM1320 756h1v1h-1zM1320 767h1v1h-1zM1320 778h1v1h-1zM1320 789h1v1h-1zM1320 800h1v1h-1zM1320 810h1v1h-1zM1320 821h1v1h-1zM1320 832h1v1h-1zM1320 843h1v1h-1zM1331 540h1v1h-1zM1331 551h1v1h-1zM1331 561h1v1h-1zM1331 572h1v1h-1zM1331 583h1v1h-1zM1331 594h1v1h-1zM1331 605h1v1h-1zM1331 616h1v1h-1zM1331 626h1v1h-1zM1331 637h1v1h-1zM1331 648h1v1h-1zM1331 659h1v1h-1zM1331 670h1v1h-1zM1331 680h1v1h-1zM1331 691h1v1h-1zM1331 702h1v1h-1zM1331 713h1v1h-1zM1331 724h1v1h-1zM1331 735h1v1h-1zM1331 745h1v1h-1zM1331 756h1v1h-1zM1331 767h1v1h-1zM1331 778h1v1h-1zM1331 789h1v1h-1zM1331 800h1v1h-1zM1331 810h1v1h-1zM1331 821h1v1h-1zM1331 832h1v1h-1zM1331 843h1v1h-1zM1342 540h1v1h-1zM1342 551h1v1h-1zM1342 561h1v1h-1zM1342 572h1v1h-1zM1342 583h1v1h-1zM1342 594h1v1h-1zM1342 605h1v1h-1zM1342 616h1v1h-1zM1342 626h1v1h-1zM1342 637h1v1h-1zM1342 648h1v1h-1zM1342 659h1v1h-1zM1342 670h1v1h-1zM1342 680h1v1h-1zM1342 691h1v1h-1zM1342 702h1v1h-1zM1342 713h1v1h-1zM1342 724h1v1h-1zM1342 735h1v1h-1zM1342 745h1v1h-1zM1342 756h1v1h-1zM1342 767h1v1h-1zM1342 778h1v1h-1zM1342 789h1v1h-1zM1342 800h1v1h-1zM1342 810h1v1h-1zM1342 821h1v1h-1zM1342 832h1v1h-1zM1342 843h1v1h-1zM1353 540h1v1h-1zM1353 551h1v1h-1zM1353 561h1v1h-1zM1353 572h1v1h-1zM1353 583h1v1h-1zM1353 594h1v1h-1zM1353 605h1v1h-1zM1353 616h1v1h-1zM1353 626h1v1h-1zM1353 637h1v1h-1zM1353 648h1v1h-1zM1353 659h1v1h-1zM1353 670h1v1h-1zM1353 680h1v1h-1zM1353 691h1v1h-1zM1353 702h1v1h-1zM1353 713h1v1h-1zM1353 724h1v1h-1zM1353 735h1v1h-1zM1353 745h1v1h-1zM1353 756h1v1h-1zM1353 767h1v1h-1zM1353 778h1v1h-1zM1353 789h1v1h-1zM1353 800h1v1h-1zM1353 810h1v1h-1zM1353 821h1v1h-1zM1353 832h1v1h-1zM1353 843h1v1h-1z" fill="#000"/><path d="M432.5 540.5L865.5 540.5M432.5 540.5L432.5 702.5M865.5 540.5L865.5 702.5M865.5 702.5L800.5 702.5M497.5 561.5L898.5 561.5M497.5 561.5L497.5 637.5M497.5 691.5L497.5 756.5M432.5 745.5L432.5 756.5M432.5 756.5L530.5 756.5M573.5 561.5L573.5 583.5M573.5 626.5L573.5 637.5M573.5 691.5L573.5 702.5M573.5 702.5L573.5 724.5M573.5 702.5L681.5 702.5M681.5 745.5L681.5 756.5M681.5 756.5L757.5 756.5M735.5 561.5L735.5 626.5M735.5 680.5L735.5 756.5M800.5 561.5L800.5 583.5M800.5 626.5L800.5 637.5M800.5 691.5L800.5 702.5M800.5 702.5L800.5 724.5M898.5 561.5L898.5 729.5M898.5 773.5L898.5 832.5M573.5 789.5L573.5 832.5M800.5 789.5L800.5 832.5M561.5 832.5L585.5 832.5L573.5 844.5ZM788.5 832.5L812.5 832.5L800.5 844.5ZM886.5 832.5L910.5 832.5L898.5 844.5Z" fill="none" stroke="#0000ff" stroke-width="1" shape-rendering="crispEdges"/><path d="M570 558h7v7h-7zM732 558h7v7h-7zM797 558h7v7h-7zM494 753h7v7h-7zM732 753h7v7h-7zM570 699h7v7h-7zM797 699h7v7h-7z" fill="#0000ff"/><path d="M497.5 637.5L497.5 643.5L508.5 648.5L486.5 659.5L508.5 670.5L486.5 680.5L497.5 686.5L497.5 691.5M573.5 637.5L573.5 643.5L584.5 648.5L562.5 659.5L584.5 670.5L562.5 680.5L573.5 686.5L573.5 691.5M735.5 626.5L735.5 632.5L746.5 637.5L725.5 648.5L746.5 659.5L725.5 670.5L735.5 675.5L735.5 680.5M800.5 637.5L800.5 643.5L811.5 648.5L790.5 659.5L811.5 670.5L790.5 680.5L800.5 686.5L800.5 691.5M432.5 702.5L432.5 721.5M432.5 727.5L432.5 745.5M421.5 721.5L443.5 721.5M421.5 727.5L443.5 727.5M681.5 702.5L681.5 721.5M681.5 727.5L681.5 745.5M670.5 721.5L692.5 721.5M670.5 727.5L692.5 727.5M573.5 583.5L573.5 597.5M573.5 613.5L573.5 626.5M562.5 597.5L584.5 597.5M573.5 597.5L562.5 613.5L584.5 613.5L573.5 597.5M556.5 599.5L553.5 602.5L550.5 602.5L546.5 598.5L546.5 595.5L542.5 591.5L538.5 591.5M541.5 594.5L535.5 594.5L538.5 588.5M556.5 610.5L553.5 613.5L550.5 613.5L546.5 609.5L546.5 606.5L542.5 602.5L538.5 602.5M541.5 605.5L535.5 605.5L538.5 599.5M800.5 583.5L800.5 597.5M800.5 613.5L800.5 626.5M790.5 597.5L811.5 597.5M800.5 597.5L790.5 613.5L811.5 613.5L800.5 597.5M783.5 599.5L780.5 602.5L777.5 602.5L773.5 598.5L773.5 595.5L769.5 591.5L765.5 591.5M768.5 594.5L762.5 594.5L765.5 588.5M783.5 610.5L780.5 613.5L777.5 613.5L773.5 609.5L773.5 606.5L769.5 602.5L765.5 602.5M768.5 605.5L762.5 605.5L765.5 599.5M530.5 756.5L541.5 756.5M541.5 735.5L541.5 778.5M541.5 745.5L573.5 724.5M557.5 778.5L573.5 789.5M541.5 767.5L559.5 775.5L554.5 781.5L541.5 767.5M757.5 756.5L768.5 756.5M768.5 735.5L768.5 778.5M768.5 745.5L800.5 724.5M784.5 778.5L800.5 789.5M768.5 767.5L787.5 775.5L781.5 781.5L768.5 767.5" fill="none" stroke="#000090" stroke-width="1" shape-rendering="crispEdges"/><circle cx="897.5" cy="751" r="21.5" fill="none" stroke="#000090" stroke-width="1.1"/><path d="M891.5 737.5H903.5M891.5 764.5H903.5M897.5 759V772" stroke="#000090" shape-rendering="crispEdges"/><g font-family='"Liberation Sans", sans-serif' font-size="15" letter-spacing="0.6" fill="#000" stroke="#c0c0c0" stroke-width="0.2"><text x="547" y="589" >D2</text><text x="557" y="632" >D</text><text x="510" y="659" >R4</text><text x="512" y="684" >100k</text><text x="586" y="659" >R2</text><text x="588" y="684" >1k</text><text x="438" y="714" >C2</text><text x="440" y="746" >10µ</text><text x="586" y="751" >Q2</text><text x="586" y="776" >BC557C</text><text x="773" y="589" >D1</text><text x="783" y="632" >D</text><text x="748" y="649" >R3</text><text x="750" y="673" >100k</text><text x="813" y="659" >R1</text><text x="815" y="684" >1k</text><text x="687" y="714" >C1</text><text x="688" y="746" >10µ</text><text x="813" y="751" >Q1</text><text x="813" y="776" >BC557C</text><text x="911" y="611" letter-spacing="1">.tran 10</text><text x="914" y="727" >9V</text><text x="915" y="784" >V1</text></g><g font-family='"Liberation Sans", sans-serif' font-size="16" font-weight="bold" letter-spacing="-0.6" fill="#000"><text transform="translate(569.5 722) rotate(-90)">Ub</text><text transform="translate(796.5 722) rotate(-90)">Ua</text></g>
</svg>
</body></html>
